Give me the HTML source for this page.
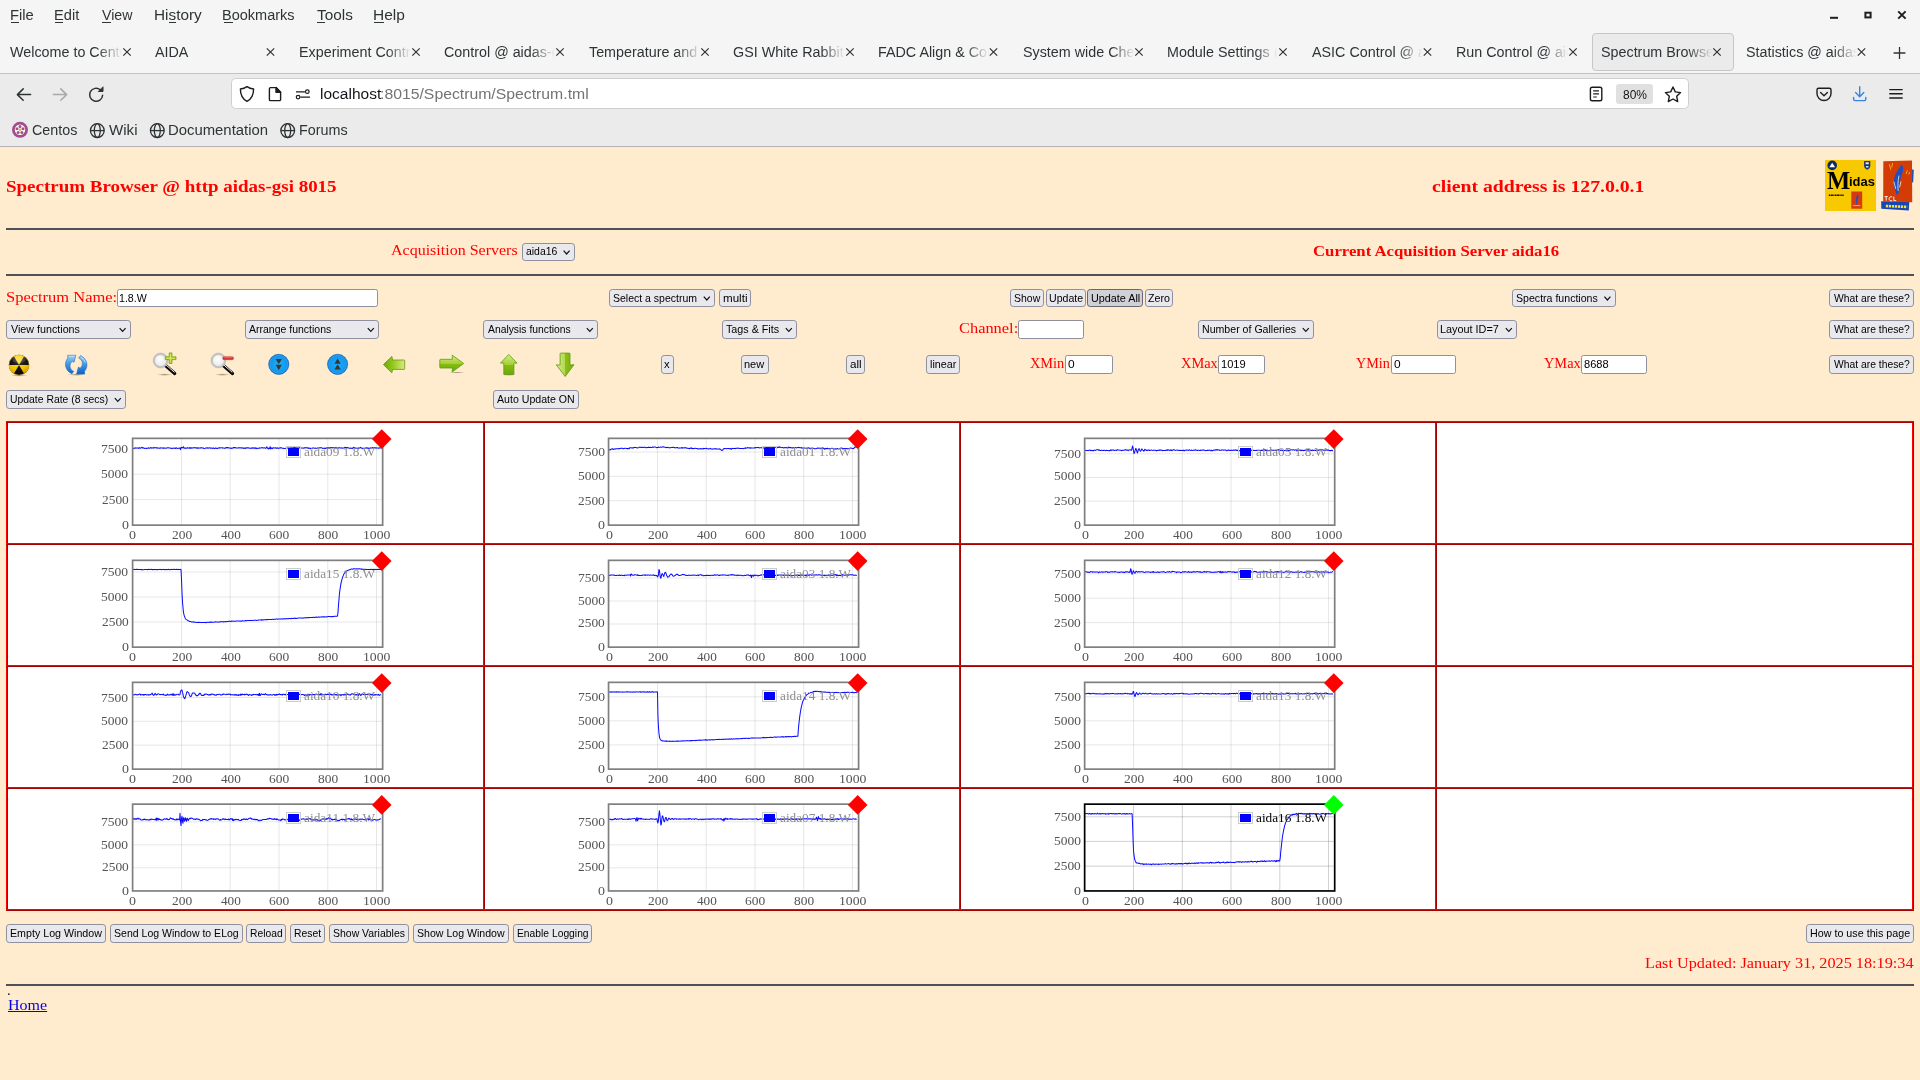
<!DOCTYPE html>
<html lang="en"><head><meta charset="utf-8"><title>Spectrum Browser</title>
<style>
html,body{margin:0;padding:0}
body{width:1920px;height:1080px;position:relative;overflow:hidden;background:#ffebcd;font-family:"Liberation Sans",sans-serif}
div,span,svg{position:absolute;box-sizing:border-box}
.t{white-space:nowrap;line-height:1;transform-origin:0 0;display:block}
.s{font-family:"Liberation Sans",sans-serif}
.sb{font-family:"Liberation Sans",sans-serif;font-weight:bold}
.r{font-family:"Liberation Serif",serif}
.rb{font-family:"Liberation Serif",serif;font-weight:bold}
.btn{background:#e9e9ed;border:1px solid #8f8f9d;border-radius:3.2px}
.btn.on{background:#d0d0d7;border-color:#676774}
.inp{background:#fff;border:1px solid #8f8f9d;border-radius:2.4px}
.hr{background:#4e5258}

</style></head>
<body>
<div style="left:0.00px;top:0.00px;width:1920.00px;height:73.00px;background:#f5f5f5"></div>
<div style="left:0.00px;top:73.00px;width:1920.00px;height:73.00px;background:#ebebeb;border-top:1px solid #c3c3c3"></div>
<div style="left:0.00px;top:146.00px;width:1920.00px;height:1.00px;background:#b4b4b4"></div>
<span class="t s" style="left:9.82px;top:8px;font-size:14.7px;color:#2e3436;transform:scaleX(1.0044);">File</span>
<span class="t s" style="left:53.83px;top:8px;font-size:14.7px;color:#2e3436;transform:scaleX(0.9955);">Edit</span>
<span class="t s" style="left:102.00px;top:8px;font-size:14.7px;color:#2e3436;transform:scaleX(0.9650);">View</span>
<span class="t s" style="left:153.77px;top:8px;font-size:14.7px;color:#2e3436;transform:scaleX(1.0440);">History</span>
<span class="t s" style="left:222.34px;top:8px;font-size:14.7px;color:#2e3436;transform:scaleX(0.9887);">Bookmarks</span>
<span class="t s" style="left:316.69px;top:8px;font-size:14.7px;color:#2e3436;transform:scaleX(1.0443);">Tools</span>
<span class="t s" style="left:372.76px;top:8px;font-size:14.7px;color:#2e3436;transform:scaleX(1.0547);">Help</span>
<div style="left:11.00px;top:21.60px;width:7.50px;height:1.10px;background:#2e3436"></div>
<div style="left:55.00px;top:21.60px;width:8.00px;height:1.10px;background:#2e3436"></div>
<div style="left:102.00px;top:21.60px;width:8.50px;height:1.10px;background:#2e3436"></div>
<div style="left:169.00px;top:21.60px;width:6.50px;height:1.10px;background:#2e3436"></div>
<div style="left:223.50px;top:21.60px;width:9.00px;height:1.10px;background:#2e3436"></div>
<div style="left:317.00px;top:21.60px;width:8.00px;height:1.10px;background:#2e3436"></div>
<div style="left:374.00px;top:21.60px;width:10.00px;height:1.10px;background:#2e3436"></div>
<svg style="left:1824px;top:6px" width="92" height="20" viewBox="1824 6 92 20"><g stroke="#1e1e1e" stroke-width="2" fill="none"><path d="M1830 17.8H1838"/><rect x="1865.4" y="12.7" width="5.2" height="4.7"/><path d="M1898.2 11.4l7.4 7.2M1905.6 11.4l-7.4 7.2"/></g></svg>
<div style="left:1592.30px;top:33.40px;width:141.50px;height:37.20px;background:#ebebeb;border:1px solid #c6c6c6;border-radius:4px"></div>
<div style="left:10px;top:43px;width:112.0px;height:20px;overflow:hidden;-webkit-mask-image:linear-gradient(to right,#000 88px,transparent 112px);mask-image:linear-gradient(to right,#000 88px,transparent 112px)"><span class="t s" style="left:0;top:2px;font-size:14.7px;color:#2e3436;transform:scaleX(.975)">Welcome to CentOS</span></div>
<svg style="left:121px;top:46px" width="12" height="12" viewBox="121 46 12 12"><g transform="translate(127.00 52.00)"><path d="M-3.7 -3.7l7.4 7.4M3.7 -3.7l-7.4 7.4" stroke="#2e3436" stroke-width="1.2" fill="none"/></g></svg>
<div style="left:154.5px;top:43px;width:111.0px;height:20px;overflow:hidden;-webkit-mask-image:linear-gradient(to right,#000 87px,transparent 111px);mask-image:linear-gradient(to right,#000 87px,transparent 111px)"><span class="t s" style="left:0;top:2px;font-size:14.7px;color:#2e3436;transform:scaleX(.975)">AIDA</span></div>
<svg style="left:264px;top:46px" width="13" height="12" viewBox="264 46 13 12"><g transform="translate(270.50 52.00)"><path d="M-3.7 -3.7l7.4 7.4M3.7 -3.7l-7.4 7.4" stroke="#2e3436" stroke-width="1.2" fill="none"/></g></svg>
<div style="left:299px;top:43px;width:112.0px;height:20px;overflow:hidden;-webkit-mask-image:linear-gradient(to right,#000 88px,transparent 112px);mask-image:linear-gradient(to right,#000 88px,transparent 112px)"><span class="t s" style="left:0;top:2px;font-size:14.7px;color:#2e3436;transform:scaleX(.975)">Experiment Control @</span></div>
<svg style="left:410px;top:46px" width="12" height="12" viewBox="410 46 12 12"><g transform="translate(416.00 52.00)"><path d="M-3.7 -3.7l7.4 7.4M3.7 -3.7l-7.4 7.4" stroke="#2e3436" stroke-width="1.2" fill="none"/></g></svg>
<div style="left:444px;top:43px;width:111.0px;height:20px;overflow:hidden;-webkit-mask-image:linear-gradient(to right,#000 87px,transparent 111px);mask-image:linear-gradient(to right,#000 87px,transparent 111px)"><span class="t s" style="left:0;top:2px;font-size:14.7px;color:#2e3436;transform:scaleX(.975)">Control @ aidas-gsi</span></div>
<svg style="left:554px;top:46px" width="12" height="12" viewBox="554 46 12 12"><g transform="translate(560.00 52.00)"><path d="M-3.7 -3.7l7.4 7.4M3.7 -3.7l-7.4 7.4" stroke="#2e3436" stroke-width="1.2" fill="none"/></g></svg>
<div style="left:588.5px;top:43px;width:111.5px;height:20px;overflow:hidden;-webkit-mask-image:linear-gradient(to right,#000 88px,transparent 112px);mask-image:linear-gradient(to right,#000 88px,transparent 112px)"><span class="t s" style="left:0;top:2px;font-size:14.7px;color:#2e3436;transform:scaleX(.975)">Temperature and status</span></div>
<svg style="left:699px;top:46px" width="12" height="12" viewBox="699 46 12 12"><g transform="translate(705.00 52.00)"><path d="M-3.7 -3.7l7.4 7.4M3.7 -3.7l-7.4 7.4" stroke="#2e3436" stroke-width="1.2" fill="none"/></g></svg>
<div style="left:733px;top:43px;width:112.0px;height:20px;overflow:hidden;-webkit-mask-image:linear-gradient(to right,#000 88px,transparent 112px);mask-image:linear-gradient(to right,#000 88px,transparent 112px)"><span class="t s" style="left:0;top:2px;font-size:14.7px;color:#2e3436;transform:scaleX(.975)">GSI White Rabbit Cont</span></div>
<svg style="left:844px;top:46px" width="12" height="12" viewBox="844 46 12 12"><g transform="translate(850.00 52.00)"><path d="M-3.7 -3.7l7.4 7.4M3.7 -3.7l-7.4 7.4" stroke="#2e3436" stroke-width="1.2" fill="none"/></g></svg>
<div style="left:877.5px;top:43px;width:111.0px;height:20px;overflow:hidden;-webkit-mask-image:linear-gradient(to right,#000 87px,transparent 111px);mask-image:linear-gradient(to right,#000 87px,transparent 111px)"><span class="t s" style="left:0;top:2px;font-size:14.7px;color:#2e3436;transform:scaleX(.975)">FADC Align &amp; Control</span></div>
<svg style="left:987px;top:46px" width="13" height="12" viewBox="987 46 13 12"><g transform="translate(993.50 52.00)"><path d="M-3.7 -3.7l7.4 7.4M3.7 -3.7l-7.4 7.4" stroke="#2e3436" stroke-width="1.2" fill="none"/></g></svg>
<div style="left:1022.5px;top:43px;width:111.5px;height:20px;overflow:hidden;-webkit-mask-image:linear-gradient(to right,#000 88px,transparent 112px);mask-image:linear-gradient(to right,#000 88px,transparent 112px)"><span class="t s" style="left:0;top:2px;font-size:14.7px;color:#2e3436;transform:scaleX(.975)">System wide Checks</span></div>
<svg style="left:1133px;top:46px" width="12" height="12" viewBox="1133 46 12 12"><g transform="translate(1139.00 52.00)"><path d="M-3.7 -3.7l7.4 7.4M3.7 -3.7l-7.4 7.4" stroke="#2e3436" stroke-width="1.2" fill="none"/></g></svg>
<div style="left:1167px;top:43px;width:111.0px;height:20px;overflow:hidden;-webkit-mask-image:linear-gradient(to right,#000 87px,transparent 111px);mask-image:linear-gradient(to right,#000 87px,transparent 111px)"><span class="t s" style="left:0;top:2px;font-size:14.7px;color:#2e3436;transform:scaleX(.975)">Module Settings @ a</span></div>
<svg style="left:1277px;top:46px" width="12" height="12" viewBox="1277 46 12 12"><g transform="translate(1283.00 52.00)"><path d="M-3.7 -3.7l7.4 7.4M3.7 -3.7l-7.4 7.4" stroke="#2e3436" stroke-width="1.2" fill="none"/></g></svg>
<div style="left:1311.5px;top:43px;width:111.0px;height:20px;overflow:hidden;-webkit-mask-image:linear-gradient(to right,#000 87px,transparent 111px);mask-image:linear-gradient(to right,#000 87px,transparent 111px)"><span class="t s" style="left:0;top:2px;font-size:14.7px;color:#2e3436;transform:scaleX(.975)">ASIC Control @ aidas</span></div>
<svg style="left:1421px;top:46px" width="13" height="12" viewBox="1421 46 13 12"><g transform="translate(1427.50 52.00)"><path d="M-3.7 -3.7l7.4 7.4M3.7 -3.7l-7.4 7.4" stroke="#2e3436" stroke-width="1.2" fill="none"/></g></svg>
<div style="left:1456px;top:43px;width:112.0px;height:20px;overflow:hidden;-webkit-mask-image:linear-gradient(to right,#000 88px,transparent 112px);mask-image:linear-gradient(to right,#000 88px,transparent 112px)"><span class="t s" style="left:0;top:2px;font-size:14.7px;color:#2e3436;transform:scaleX(.975)">Run Control @ aidas</span></div>
<svg style="left:1567px;top:46px" width="12" height="12" viewBox="1567 46 12 12"><g transform="translate(1573.00 52.00)"><path d="M-3.7 -3.7l7.4 7.4M3.7 -3.7l-7.4 7.4" stroke="#2e3436" stroke-width="1.2" fill="none"/></g></svg>
<div style="left:1600.7px;top:43px;width:111.3px;height:20px;overflow:hidden;-webkit-mask-image:linear-gradient(to right,#000 87px,transparent 111px);mask-image:linear-gradient(to right,#000 87px,transparent 111px)"><span class="t s" style="left:0;top:2px;font-size:14.7px;color:#2e3436;transform:scaleX(.975)">Spectrum Browser @</span></div>
<svg style="left:1711px;top:46px" width="12" height="12" viewBox="1711 46 12 12"><g transform="translate(1717.00 52.00)"><path d="M-3.7 -3.7l7.4 7.4M3.7 -3.7l-7.4 7.4" stroke="#2e3436" stroke-width="1.2" fill="none"/></g></svg>
<div style="left:1745.5px;top:43px;width:111.0px;height:20px;overflow:hidden;-webkit-mask-image:linear-gradient(to right,#000 87px,transparent 111px);mask-image:linear-gradient(to right,#000 87px,transparent 111px)"><span class="t s" style="left:0;top:2px;font-size:14.7px;color:#2e3436;transform:scaleX(.975)">Statistics @ aidas-gsi</span></div>
<svg style="left:1855px;top:46px" width="13" height="12" viewBox="1855 46 13 12"><g transform="translate(1861.50 52.00)"><path d="M-3.7 -3.7l7.4 7.4M3.7 -3.7l-7.4 7.4" stroke="#2e3436" stroke-width="1.2" fill="none"/></g></svg>
<svg style="left:1891px;top:45px" width="17" height="16" viewBox="1891 45 17 16"><g transform="translate(1899.50 53.00)"><path d="M0 -5.9v11.8M-5.9 0h11.8" stroke="#2e3436" stroke-width="1.3" fill="none"/></g></svg>
<svg style="left:10px;top:84px" width="100" height="22" viewBox="10 84 100 22" fill="none" stroke-linecap="round" stroke-linejoin="round" stroke-width="1.5"><path d="M30.6 94.6H17.6M23.2 88.9l-5.8 5.7 5.8 5.7" stroke="#2e3436"/><path d="M53.4 94.6H66.4M60.8 88.9l5.8 5.7-5.8 5.7" stroke="#a9a9a9"/><path d="M102.6 95.2a6.5 6.5 0 1 1-2.2-5.3" stroke="#2e3436"/><path d="M103 87.2v4.3h-4.3z" fill="#2e3436" stroke="#2e3436" stroke-width="1"/></svg>
<div style="left:231.20px;top:78.30px;width:1457.50px;height:31.00px;background:#fff;border:1px solid #cfcfcf;border-radius:4.5px"></div>
<svg style="left:236px;top:84px" width="80" height="20" viewBox="236 84 80 20" fill="none" stroke="#1c1c1c" stroke-width="1.4" stroke-linejoin="round"><path d="M247 86.6c2.2 1.6 4.3 2.2 6.6 2.4 0 5.4-1.3 9.6-6.6 12.4-5.3-2.8-6.6-7-6.6-12.4 2.3-.2 4.4-.8 6.6-2.4z"/><path d="M270.6 87.6h5.4l4.6 4.6v7.2a1.2 1.2 0 0 1-1.2 1.2h-8.8a1.2 1.2 0 0 1-1.2-1.2v-10.6a1.2 1.2 0 0 1 1.2-1.2z"/><path d="M276 87.6v4.6h4.6z" fill="#1c1c1c"/><g stroke-width="1.25"><path d="M296 91.8h8.9M300.4 97.2H310"/><circle cx="307.3" cy="91.7" r="1.8"/><circle cx="298.1" cy="97.1" r="1.8"/></g></svg>
<span class="t s" style="left:320.49px;top:86px;font-size:15.3px;color:#15141a;transform:scaleX(1.0141);">localhost</span>
<span class="t s" style="left:380.28px;top:86px;font-size:15.3px;color:#737373;transform:scaleX(1.0313);">:8015/Spectrum/Spectrum.tml</span>
<svg style="left:1588px;top:84px" width="100" height="20" viewBox="1588 84 100 20" fill="none" stroke="#1c1c1c" stroke-width="1.4" stroke-linejoin="round"><rect x="1590.4" y="87.2" width="11.4" height="13.6" rx="1.8"/><path d="M1593.2 90.8h5.8M1593.2 93.9h5.8M1593.2 97h3.6" stroke-width="1.2"/><path d="M1673 87l2.3 4.9 5.3.7-3.9 3.7 1 5.3-4.7-2.6-4.7 2.6 1-5.3-3.9-3.7 5.3-.7z"/></svg>
<div style="left:1615.90px;top:84.40px;width:37.00px;height:19.30px;background:#e0e0e0;border-radius:3px"></div>
<span class="t s" style="left:1622.72px;top:89px;font-size:12.3px;color:#15141a;transform:scaleX(0.9756);">80%</span>
<svg style="left:1812px;top:84px" width="96" height="20" viewBox="1812 84 96 20" fill="none" stroke-width="1.4" stroke-linecap="round" stroke-linejoin="round"><path d="M1818.6 88.3h10.8a1.6 1.6 0 0 1 1.6 1.6v3.6a7 7 0 0 1-14 0v-3.6a1.6 1.6 0 0 1 1.6-1.6z" stroke="#1c1c1c"/><path d="M1820.6 92.6l3.4 3.2 3.4-3.2" stroke="#1c1c1c"/><path d="M1859.7 86.8v9.6M1855.6 92.6l4.1 4.1 4.1-4.1M1853.6 97.4v1.6a1.6 1.6 0 0 0 1.6 1.6h9a1.6 1.6 0 0 0 1.6-1.6v-1.6" stroke="#3584e4"/><path d="M1889.8 89.6h12.4M1889.8 93.8h12.4M1889.8 98h12.4" stroke="#1c1c1c"/></svg>
<svg style="left:10px;top:119px" width="20" height="21" viewBox="10 119 20 21"><g transform="translate(20.00 129.80)"><circle r="8" fill="#a14f8c"/><circle r="5.2" fill="#fff"/><g fill="#a14f8c"><circle cx="0" cy="-3.2" r="1.5"/><circle cx="3" cy="-1" r="1.5"/><circle cx="1.9" cy="2.6" r="1.5"/><circle cx="-1.9" cy="2.6" r="1.5"/><circle cx="-3" cy="-1" r="1.5"/></g><circle r="1.3" fill="#efa724"/></g></svg>
<span class="t s" style="left:31.58px;top:123px;font-size:14.7px;color:#2e3436;transform:scaleX(0.9747);">Centos</span>
<svg style="left:88px;top:121px" width="19" height="19" viewBox="88 121 19 19" fill="none" stroke="#2e3436" stroke-width="1.3"><g transform="translate(97.30 130.60)"><circle r="6.9"/><ellipse rx="3" ry="6.9"/><path d="M-6.9 0H6.9"/></g></svg>
<span class="t s" style="left:109.00px;top:123px;font-size:14.7px;color:#2e3436;transform:scaleX(1.0279);">Wiki</span>
<svg style="left:148px;top:121px" width="19" height="19" viewBox="148 121 19 19" fill="none" stroke="#2e3436" stroke-width="1.3"><g transform="translate(157.30 130.60)"><circle r="6.9"/><ellipse rx="3" ry="6.9"/><path d="M-6.9 0H6.9"/></g></svg>
<span class="t s" style="left:167.81px;top:123px;font-size:14.7px;color:#2e3436;transform:scaleX(1.0124);">Documentation</span>
<svg style="left:278px;top:121px" width="19" height="19" viewBox="278 121 19 19" fill="none" stroke="#2e3436" stroke-width="1.3"><g transform="translate(287.70 130.60)"><circle r="6.9"/><ellipse rx="3" ry="6.9"/><path d="M-6.9 0H6.9"/></g></svg>
<span class="t s" style="left:298.85px;top:123px;font-size:14.7px;color:#2e3436;transform:scaleX(0.9763);">Forums</span>
<span class="t rb" style="left:6.05px;top:178px;font-size:17.2px;color:#ff0000;transform:scaleX(1.1041);">Spectrum Browser @ http aidas-gsi 8015</span>
<span class="t rb" style="left:1432.41px;top:178px;font-size:17.2px;color:#ff0000;transform:scaleX(1.1486);">client address is 127.0.0.1</span>
<div class="hr" style="left:6.20px;top:228.00px;width:1907.40px;height:2.00px;"></div>
<span class="t r" style="left:391.42px;top:243px;font-size:14.8px;color:#ff0000;transform:scaleX(1.0811);">Acquisition Servers</span>
<div class="btn" style="left:521.60px;top:242.80px;width:53.20px;height:18.40px;"></div>
<span class="t s" style="left:525.58px;top:246px;font-size:10.9px;color:#000;transform:scaleX(0.9583);">aida16</span>
<svg style="left:561px;top:247px" width="11" height="11" viewBox="561 247 11 11"><g transform="translate(566.60 252.40)"><path d="M-3 -1.7L0 1.6 3 -1.7" fill="none" stroke="#15141a" stroke-width="1.25"/></g></svg>
<span class="t rb" style="left:1313.25px;top:244px;font-size:14.8px;color:#ff0000;transform:scaleX(1.1304);">Current Acquisition Server aida16</span>
<div class="hr" style="left:6.20px;top:273.60px;width:1907.40px;height:2.00px;"></div>
<span class="t r" style="left:5.93px;top:290px;font-size:14.8px;color:#ff0000;transform:scaleX(1.1130);">Spectrum Name:</span>
<div class="inp" style="left:117.20px;top:289.20px;width:260.60px;height:17.50px;"></div>
<span class="t s" style="left:119.20px;top:293px;font-size:10.9px;color:#000;transform:scaleX(0.9752);">1.8.W</span>
<div class="btn" style="left:609.00px;top:289.20px;width:106.00px;height:17.50px;"></div>
<span class="t s" style="left:613.03px;top:293px;font-size:10.9px;color:#000;transform:scaleX(0.9645);">Select a spectrum</span>
<svg style="left:701px;top:293px" width="11" height="11" viewBox="701 293 11 11"><g transform="translate(706.80 298.35)"><path d="M-3 -1.7L0 1.6 3 -1.7" fill="none" stroke="#15141a" stroke-width="1.25"/></g></svg>
<div class="btn" style="left:719.00px;top:289.20px;width:32.00px;height:17.50px;"></div>
<span class="t s" style="left:722.74px;top:293px;font-size:10.9px;color:#000;transform:scaleX(1.0657);">multi</span>
<div class="btn" style="left:1010.10px;top:289.20px;width:34.20px;height:17.50px;"></div>
<span class="t s" style="left:1014.03px;top:293px;font-size:10.9px;color:#000;transform:scaleX(0.9622);">Show</span>
<div class="btn" style="left:1045.70px;top:289.20px;width:40.50px;height:17.50px;"></div>
<span class="t s" style="left:1048.70px;top:293px;font-size:10.9px;color:#000;transform:scaleX(0.9735);">Update</span>
<div class="btn on" style="left:1087.40px;top:289.20px;width:56.00px;height:17.50px;"></div>
<span class="t s" style="left:1090.59px;top:293px;font-size:10.9px;color:#000;transform:scaleX(0.9922);">Update All</span>
<div class="btn" style="left:1144.80px;top:289.20px;width:27.80px;height:17.50px;"></div>
<span class="t s" style="left:1147.68px;top:293px;font-size:10.9px;color:#000;transform:scaleX(0.9798);">Zero</span>
<div class="btn" style="left:1512.00px;top:289.20px;width:103.60px;height:17.50px;"></div>
<span class="t s" style="left:1516.02px;top:293px;font-size:10.9px;color:#000;transform:scaleX(0.9720);">Spectra functions</span>
<svg style="left:1602px;top:293px" width="11" height="11" viewBox="1602 293 11 11"><g transform="translate(1607.40 298.35)"><path d="M-3 -1.7L0 1.6 3 -1.7" fill="none" stroke="#15141a" stroke-width="1.25"/></g></svg>
<div class="btn" style="left:1829.00px;top:289.20px;width:84.80px;height:17.50px;"></div>
<span class="t s" style="left:1833.50px;top:293px;font-size:10.9px;color:#000;transform:scaleX(0.9489);">What are these?</span>
<div class="btn" style="left:6.10px;top:320.10px;width:124.70px;height:18.60px;"></div>
<span class="t s" style="left:10.60px;top:324px;font-size:10.9px;color:#000;transform:scaleX(0.9841);">View functions</span>
<svg style="left:117px;top:324px" width="11" height="11" viewBox="117 324 11 11"><g transform="translate(122.60 329.80)"><path d="M-3 -1.7L0 1.6 3 -1.7" fill="none" stroke="#15141a" stroke-width="1.25"/></g></svg>
<div class="btn" style="left:245.00px;top:320.10px;width:134.00px;height:18.60px;"></div>
<span class="t s" style="left:249.00px;top:324px;font-size:10.9px;color:#000;transform:scaleX(0.9639);">Arrange functions</span>
<svg style="left:365px;top:324px" width="11" height="11" viewBox="365 324 11 11"><g transform="translate(370.80 329.80)"><path d="M-3 -1.7L0 1.6 3 -1.7" fill="none" stroke="#15141a" stroke-width="1.25"/></g></svg>
<div class="btn" style="left:483.00px;top:320.10px;width:115.00px;height:18.60px;"></div>
<span class="t s" style="left:487.50px;top:324px;font-size:10.9px;color:#000;transform:scaleX(0.9497);">Analysis functions</span>
<svg style="left:584px;top:324px" width="11" height="11" viewBox="584 324 11 11"><g transform="translate(589.80 329.80)"><path d="M-3 -1.7L0 1.6 3 -1.7" fill="none" stroke="#15141a" stroke-width="1.25"/></g></svg>
<div class="btn" style="left:721.60px;top:320.10px;width:75.40px;height:18.60px;"></div>
<span class="t s" style="left:725.79px;top:324px;font-size:10.9px;color:#000;transform:scaleX(0.9850);">Tags &amp; Fits</span>
<svg style="left:783px;top:324px" width="11" height="11" viewBox="783 324 11 11"><g transform="translate(788.80 329.80)"><path d="M-3 -1.7L0 1.6 3 -1.7" fill="none" stroke="#15141a" stroke-width="1.25"/></g></svg>
<span class="t r" style="left:959.34px;top:321px;font-size:14.8px;color:#ff0000;transform:scaleX(1.1078);">Channel:</span>
<div class="inp" style="left:1018.30px;top:320.10px;width:65.40px;height:18.60px;"></div>
<div class="btn" style="left:1198.00px;top:320.10px;width:116.00px;height:18.60px;"></div>
<span class="t s" style="left:1201.65px;top:324px;font-size:10.9px;color:#000;transform:scaleX(0.9723);">Number of Galleries</span>
<svg style="left:1300px;top:324px" width="11" height="11" viewBox="1300 324 11 11"><g transform="translate(1305.80 329.80)"><path d="M-3 -1.7L0 1.6 3 -1.7" fill="none" stroke="#15141a" stroke-width="1.25"/></g></svg>
<div class="btn" style="left:1437.00px;top:320.10px;width:80.00px;height:18.60px;"></div>
<span class="t s" style="left:1440.13px;top:324px;font-size:10.9px;color:#000;transform:scaleX(0.9963);">Layout ID=7</span>
<svg style="left:1503px;top:324px" width="11" height="11" viewBox="1503 324 11 11"><g transform="translate(1508.80 329.80)"><path d="M-3 -1.7L0 1.6 3 -1.7" fill="none" stroke="#15141a" stroke-width="1.25"/></g></svg>
<div class="btn" style="left:1829.00px;top:320.10px;width:84.80px;height:18.60px;"></div>
<span class="t s" style="left:1833.50px;top:324px;font-size:10.9px;color:#000;transform:scaleX(0.9489);">What are these?</span>
<div class="btn" style="left:660.60px;top:354.80px;width:13.60px;height:18.80px;"></div>
<span class="t s" style="left:664.49px;top:359px;font-size:10.9px;color:#000;transform:scaleX(1.0321);">x</span>
<div class="btn" style="left:740.60px;top:354.80px;width:28.40px;height:18.80px;"></div>
<span class="t s" style="left:744.28px;top:359px;font-size:10.9px;color:#000;transform:scaleX(1.0107);">new</span>
<div class="btn" style="left:845.60px;top:354.80px;width:19.40px;height:18.80px;"></div>
<span class="t s" style="left:849.53px;top:359px;font-size:10.9px;color:#000;transform:scaleX(1.0703);">all</span>
<div class="btn" style="left:926.00px;top:354.80px;width:34.30px;height:18.80px;"></div>
<span class="t s" style="left:929.80px;top:359px;font-size:10.9px;color:#000;transform:scaleX(0.9871);">linear</span>
<span class="t r" style="left:1030.21px;top:356px;font-size:14.8px;color:#ff0000;transform:scaleX(0.9698);">XMin</span>
<div class="inp" style="left:1065.00px;top:354.80px;width:48.00px;height:18.80px;"></div>
<span class="t s" style="left:1068.18px;top:359px;font-size:10.9px;color:#000;transform:scaleX(1.0971);">0</span>
<span class="t r" style="left:1180.71px;top:356px;font-size:14.8px;color:#ff0000;transform:scaleX(0.9714);">XMax</span>
<div class="inp" style="left:1218.00px;top:354.80px;width:47.00px;height:18.80px;"></div>
<span class="t s" style="left:1220.77px;top:359px;font-size:10.9px;color:#000;transform:scaleX(1.0199);">1019</span>
<span class="t r" style="left:1355.86px;top:356px;font-size:14.8px;color:#ff0000;transform:scaleX(0.9571);">YMin</span>
<div class="inp" style="left:1390.50px;top:354.80px;width:65.50px;height:18.80px;"></div>
<span class="t s" style="left:1393.58px;top:359px;font-size:10.9px;color:#000;transform:scaleX(1.0971);">0</span>
<span class="t r" style="left:1543.86px;top:356px;font-size:14.8px;color:#ff0000;transform:scaleX(0.9702);">YMax</span>
<div class="inp" style="left:1581.00px;top:354.80px;width:66.00px;height:18.80px;"></div>
<span class="t s" style="left:1584.16px;top:359px;font-size:10.9px;color:#000;transform:scaleX(1.0179);">8688</span>
<div class="btn" style="left:1829.00px;top:354.80px;width:84.80px;height:18.80px;"></div>
<span class="t s" style="left:1833.50px;top:359px;font-size:10.9px;color:#000;transform:scaleX(0.9489);">What are these?</span>
<div class="btn" style="left:6.10px;top:390.10px;width:119.90px;height:18.60px;"></div>
<span class="t s" style="left:9.82px;top:394px;font-size:10.9px;color:#000;transform:scaleX(0.9544);">Update Rate (8 secs)</span>
<svg style="left:112px;top:394px" width="11" height="11" viewBox="112 394 11 11"><g transform="translate(117.80 399.80)"><path d="M-3 -1.7L0 1.6 3 -1.7" fill="none" stroke="#15141a" stroke-width="1.25"/></g></svg>
<div class="btn" style="left:493.00px;top:390.10px;width:86.00px;height:18.60px;"></div>
<span class="t s" style="left:497.30px;top:394px;font-size:10.9px;color:#000;transform:scaleX(0.9730);">Auto Update ON</span>
<div class="btn" style="left:6.00px;top:924.20px;width:100.00px;height:18.80px;"></div>
<span class="t s" style="left:9.65px;top:928px;font-size:10.9px;color:#000;transform:scaleX(0.9797);">Empty Log Window</span>
<div class="btn" style="left:110.00px;top:924.20px;width:132.50px;height:18.80px;"></div>
<span class="t s" style="left:114.03px;top:928px;font-size:10.9px;color:#000;transform:scaleX(0.9671);">Send Log Window to ELog</span>
<div class="btn" style="left:246.00px;top:924.20px;width:40.00px;height:18.80px;"></div>
<span class="t s" style="left:249.68px;top:928px;font-size:10.9px;color:#000;transform:scaleX(0.9447);">Reload</span>
<div class="btn" style="left:290.00px;top:924.20px;width:35.00px;height:18.80px;"></div>
<span class="t s" style="left:293.67px;top:928px;font-size:10.9px;color:#000;transform:scaleX(0.9501);">Reset</span>
<div class="btn" style="left:329.00px;top:924.20px;width:80.00px;height:18.80px;"></div>
<span class="t s" style="left:333.03px;top:928px;font-size:10.9px;color:#000;transform:scaleX(0.9613);">Show Variables</span>
<div class="btn" style="left:413.00px;top:924.20px;width:96.00px;height:18.80px;"></div>
<span class="t s" style="left:417.02px;top:928px;font-size:10.9px;color:#000;transform:scaleX(0.9709);">Show Log Window</span>
<div class="btn" style="left:513.00px;top:924.20px;width:79.00px;height:18.80px;"></div>
<span class="t s" style="left:516.68px;top:928px;font-size:10.9px;color:#000;transform:scaleX(0.9457);">Enable Logging</span>
<div class="btn" style="left:1806.00px;top:924.20px;width:107.80px;height:18.80px;"></div>
<span class="t s" style="left:1809.64px;top:928px;font-size:10.9px;color:#000;transform:scaleX(0.9851);">How to use this page</span>
<span class="t r" style="left:1644.59px;top:956px;font-size:14.8px;color:#ff0000;transform:scaleX(1.0965);">Last Updated: January 31, 2025 18:19:34</span>
<div class="hr" style="left:6.20px;top:984.40px;width:1907.40px;height:2.00px;"></div>
<span class="t r" style="left:7.30px;top:983px;font-size:14.8px;color:#222;transform:scaleX(1.0006);">.</span>
<span class="t r" style="left:7.80px;top:998px;font-size:14.8px;color:#0000ee;transform:scaleX(1.0822);text-decoration:underline">Home</span>
<div style="left:6.00px;top:421.00px;width:1908.00px;height:490.00px;background:#fff"></div>
<div style="left:6.00px;top:421.00px;width:2.00px;height:490.00px;background:linear-gradient(to right,#ff0000 50%,#a80000 50%)"></div>
<div style="left:483.00px;top:421.00px;width:2.00px;height:490.00px;background:linear-gradient(to right,#ff0000 50%,#a80000 50%)"></div>
<div style="left:959.00px;top:421.00px;width:2.00px;height:490.00px;background:linear-gradient(to right,#ff0000 50%,#a80000 50%)"></div>
<div style="left:1435.00px;top:421.00px;width:2.00px;height:490.00px;background:linear-gradient(to right,#ff0000 50%,#a80000 50%)"></div>
<div style="left:1912.00px;top:421.00px;width:2.00px;height:490.00px;background:linear-gradient(to right,#ff0000 50%,#a80000 50%)"></div>
<div style="left:6.00px;top:421.00px;width:1908.00px;height:2.00px;background:linear-gradient(to bottom,#ff0000 50%,#a80000 50%)"></div>
<div style="left:6.00px;top:543.00px;width:1908.00px;height:2.00px;background:linear-gradient(to bottom,#ff0000 50%,#a80000 50%)"></div>
<div style="left:6.00px;top:665.00px;width:1908.00px;height:2.00px;background:linear-gradient(to bottom,#ff0000 50%,#a80000 50%)"></div>
<div style="left:6.00px;top:787.00px;width:1908.00px;height:2.00px;background:linear-gradient(to bottom,#ff0000 50%,#a80000 50%)"></div>
<div style="left:6.00px;top:909.00px;width:1908.00px;height:2.00px;background:linear-gradient(to bottom,#ff0000 50%,#a80000 50%)"></div>
<svg style="left:129px;top:425px" width="267" height="105" viewBox="129 425 267 105"><path d="M181.5 438.5V525.1M230.2 438.5V525.1M279 438.5V525.1M327.8 438.5V525.1M376.5 438.5V525.1M132.8 499.6H382.1M132.8 474.2H382.1M132.8 448.8H382.1" stroke="rgba(84,84,84,0.16)" stroke-width="0.9" fill="none"/><path d="M132.8 448.4L133.2 448.4L133.7 448.5L134.2 448.2L134.7 448.1L135.2 447.8L135.7 448.2L136.2 448L136.7 448L137.1 447.9L137.6 448L138.1 448.1L138.6 448.4L139.1 447.7L139.6 447.8L140.1 448.1L140.6 448.2L141 448L141.5 447.5L142 447.3L142.5 447.9L143 447.8L143.5 447.8L144 448.3L144.4 448.4L144.9 448.3L145.4 448.3L145.9 448.3L146.4 448.5L146.9 448.3L147.4 448.2L147.9 448.2L148.3 447.7L148.8 448.2L149.3 448.2L149.8 448.1L150.3 447.6L150.8 447.9L151.3 448.2L151.8 447.7L152.2 447.9L152.7 448.1L153.2 447.6L153.7 448.1L154.2 447.8L154.7 447.6L155.2 447.7L155.7 447.8L156.2 447.7L156.6 448L157.1 447.7L157.6 447.9L158.1 448.2L158.6 448.1L159.1 447.9L159.6 448.2L160.1 448.3L160.5 447.9L161 447.7L161.5 447.9L162 447.9L162.5 447.9L163 448.3L163.5 447.8L163.9 448.3L164.4 447.9L164.9 447.9L165.4 448.2L165.9 448.2L166.4 448.1L166.9 447.9L167.4 447.8L167.8 447.8L168.3 447.9L168.8 447.7L169.3 447.9L169.8 448L170.3 448L170.8 448.3L171.3 448.3L171.8 448.6L172.2 448.3L172.7 448.2L173.2 448.1L173.7 448.2L174.2 448.3L174.7 448.1L175.2 448.2L175.7 448.5L176.1 447.7L176.6 448L177.1 448.3L177.6 448.4L178.1 448.3L178.6 448.1L179.1 448.4L179.6 448.2L180 447.7L180.5 449.7L181 448.1L181.5 447.3L182 447.7L182.5 447.6L183 447.8L183.4 446.7L183.9 447.8L184.4 448.3L184.9 447.8L185.4 448.1L185.9 448.3L186.4 448.2L186.9 448.3L187.3 447.6L187.8 447.9L188.3 447.9L188.8 448.1L189.3 448.2L189.8 447.5L190.3 448.3L190.8 447.8L191.2 448.2L191.7 447.8L192.2 448L192.7 448.1L193.2 447.8L193.7 447.8L194.2 447.8L194.7 447.6L195.2 447.6L195.6 448L196.1 447.9L196.6 447.7L197.1 448.4L197.6 447.7L198.1 448.2L198.6 447.9L199.1 448L199.5 448.1L200 448L200.5 448.1L201 447.6L201.5 447.7L202 448.1L202.5 447.9L202.9 447.9L203.4 447.9L203.9 448.5L204.4 448.4L204.9 448.5L205.4 448L205.9 448.1L206.4 447.8L206.8 448.1L207.3 448.2L207.8 447.7L208.3 448.2L208.8 448.1L209.3 447.9L209.8 447.6L210.3 448.3L210.8 448.1L211.2 448L211.7 448.2L212.2 448.2L212.7 448.4L213.2 447.9L213.7 448.3L214.2 448.4L214.6 448.4L215.1 448.1L215.6 448L216.1 448.4L216.6 448.3L217.1 448.3L217.6 448.6L218.1 448.2L218.6 447.8L219 448.1L219.5 447.7L220 448.1L220.5 447.9L221 447.7L221.5 447.7L222 447.9L222.4 447.8L222.9 448.1L223.4 447.9L223.9 448.1L224.4 448.2L224.9 448.3L225.4 447.8L225.9 448.1L226.3 447.5L226.8 447.6L227.3 447.4L227.8 448L228.3 447.6L228.8 447.9L229.3 448L229.8 448.1L230.2 448L230.7 448.2L231.2 448.5L231.7 448.1L232.2 448.1L232.7 448.2L233.2 447.8L233.7 447.5L234.1 447.6L234.6 447.9L235.1 447.4L235.6 447.6L236.1 448L236.6 448L237.1 447.9L237.6 448.1L238.1 448L238.5 447.7L239 447.7L239.5 447.8L240 448.1L240.5 447.8L241 447.8L241.5 447.9L241.9 447.8L242.4 448.1L242.9 448L243.4 448.4L243.9 447.9L244.4 448.4L244.9 448.2L245.4 447.9L245.8 448.4L246.3 448.1L246.8 447.6L247.3 447.8L247.8 448L248.3 447.8L248.8 448.1L249.3 448.1L249.8 448.2L250.2 448.1L250.7 448.4L251.2 448.2L251.7 448.2L252.2 447.6L252.7 448.2L253.2 448.2L253.6 447.9L254.1 447.8L254.6 448.4L255.1 447.7L255.6 448.2L256.1 448.7L256.6 448L257.1 448.4L257.6 448.6L258 448.2L258.5 448.3L259 448.3L259.5 447.8L260 447.9L260.5 447.9L261 447.9L261.4 447.8L261.9 447.7L262.4 447.6L262.9 447.8L263.4 448L263.9 447.9L264.4 447.7L264.9 447.7L265.4 448.4L265.8 448.1L266.3 447.9L266.8 446.7L267.3 448L267.8 448.1L268.3 449.1L268.8 448.3L269.2 448L269.7 448.6L270.2 446.7L270.7 448.9L271.2 448.4L271.7 447.9L272.2 448.5L272.7 448.5L273.1 447.6L273.6 447.8L274.1 447.9L274.6 447.9L275.1 447.8L275.6 447.7L276.1 448.4L276.6 448.2L277 447.8L277.5 447.8L278 448.4L278.5 448.2L279 448.3L279.5 448.1L280 447.7L280.5 448L280.9 447.5L281.4 447.9L281.9 448.1L282.4 448.3L282.9 448.1L283.4 448.3L283.9 448.5L284.4 448.5L284.9 448.5L285.3 448.3L285.8 448.2L286.3 448.3L286.8 448.1L287.3 447.9L287.8 447.9L288.3 448L288.8 448L289.2 448.1L289.7 448.1L290.2 448.1L290.7 448L291.2 447.8L291.7 448L292.2 448.1L292.6 447.9L293.1 447.7L293.6 447.9L294.1 447.6L294.6 447.5L295.1 447.9L295.6 447.8L296.1 448.2L296.5 447.9L297 447.7L297.5 448L298 448.5L298.5 448L299 447.8L299.5 447.8L300 448L300.4 447.9L300.9 447.9L301.4 448.1L301.9 448L302.4 447.9L302.9 448L303.4 448.2L303.9 448.1L304.4 448.1L304.8 447.6L305.3 447.7L305.8 447.9L306.3 447.6L306.8 447.9L307.3 447.8L307.8 447.9L308.2 447.8L308.7 448.5L309.2 448.3L309.7 448.1L310.2 448.2L310.7 448.8L311.2 448.2L311.7 448.4L312.1 448.4L312.6 448.1L313.1 447.8L313.6 448.1L314.1 448.1L314.6 448.3L315.1 448.2L315.6 448.1L316 448.3L316.5 448.3L317 448.2L317.5 448.1L318 448L318.5 448.1L319 447.7L319.5 447.8L319.9 447.9L320.4 447.6L320.9 447.8L321.4 447.6L321.9 447.9L322.4 448.3L322.9 448.4L323.4 448.3L323.9 448.3L324.3 448L324.8 448.6L325.3 448.3L325.8 448.4L326.3 447.9L326.8 448L327.3 447.7L327.8 448.2L328.2 448.2L328.7 447.7L329.2 448.1L329.7 448.2L330.2 447.7L330.7 447.6L331.2 447.7L331.6 447.7L332.1 447.5L332.6 447.7L333.1 447.7L333.6 447.8L334.1 447.8L334.6 448L335.1 448L335.5 447.6L336 447.9L336.5 447.8L337 447.9L337.5 448.1L338 448.1L338.5 448.1L339 447.6L339.4 447.7L339.9 447.9L340.4 447.9L340.9 447.9L341.4 447.9L341.9 447.8L342.4 448.2L342.9 448.1L343.4 448L343.8 447.9L344.3 447.9L344.8 447.3L345.3 447.6L345.8 447.7L346.3 447.4L346.8 447.7L347.2 447.8L347.7 447.5L348.2 447.8L348.7 447.9L349.2 448.2L349.7 448.3L350.2 448.2L350.7 448L351.1 448.2L351.6 448.2L352.1 448.5L352.6 448.3L353.1 447.7L353.6 447.3L354.1 447.9L354.6 447.8L355 447.8L355.5 448.2L356 448.1L356.5 448.3L357 448.3L357.5 448.1L358 448.5L358.5 447.9L358.9 448.1L359.4 447.9L359.9 448L360.4 447.3L360.9 447.7L361.4 448L361.9 448.1L362.4 448.5L362.9 448.2L363.3 448.4L363.8 448.3L364.3 448.3L364.8 448.2L365.3 448L365.8 448.1L366.3 447.8L366.8 448.2L367.2 447.8L367.7 448.1L368.2 448.5L368.7 448.1L369.2 448.1L369.7 448.3L370.2 448.1L370.6 447.8L371.1 448L371.6 447.9L372.1 447.9L372.6 447.5L373.1 448L373.6 447.9L374.1 447.6L374.5 447.8L375 447.7L375.5 448.1L376 447.8L376.5 448.1L377 447.9L377.5 447.9L378 448.1L378.4 448.2L378.9 447.9L379.4 447.8L379.9 448.1L380.4 448L380.9 448.1" stroke="#0c0cff" stroke-width="1.02" fill="none" stroke-linejoin="round"/><rect x="132.60" y="438.35" width="250.05" height="86.80" fill="none" stroke="#7f7f7f" stroke-width="1.7"/><path d="M381.75 429.20l9.8 9.9-9.8 9.9-9.8-9.9z" fill="#ff0000"/></svg>
<span class="t r" style="left:121.51px;top:520px;font-size:11.5px;color:#545454;transform:scaleX(1.2133);">0</span>
<span class="t r" style="left:101.66px;top:495px;font-size:11.5px;color:#545454;transform:scaleX(1.1654);">2500</span>
<span class="t r" style="left:101.46px;top:469px;font-size:11.5px;color:#545454;transform:scaleX(1.1746);">5000</span>
<span class="t r" style="left:101.32px;top:444px;font-size:11.5px;color:#545454;transform:scaleX(1.1808);">7500</span>
<span class="t r" style="left:129.46px;top:530px;font-size:11.5px;color:#545454;transform:scaleX(1.2133);">0</span>
<span class="t r" style="left:171.56px;top:530px;font-size:11.5px;color:#545454;transform:scaleX(1.1716);">200</span>
<span class="t r" style="left:220.65px;top:530px;font-size:11.5px;color:#545454;transform:scaleX(1.1514);">400</span>
<span class="t r" style="left:269.06px;top:530px;font-size:11.5px;color:#545454;transform:scaleX(1.1716);">600</span>
<span class="t r" style="left:317.88px;top:530px;font-size:11.5px;color:#545454;transform:scaleX(1.1675);">800</span>
<span class="t r" style="left:362.63px;top:530px;font-size:11.5px;color:#545454;transform:scaleX(1.1933);">1000</span>
<div style="left:286.25px;top:446.25px;width:14.50px;height:11.75px;border:1px solid #ccc"></div>
<div style="left:288.05px;top:447.80px;width:11.10px;height:8.50px;background:#0000ff"></div>
<span class="t r" style="left:303.79px;top:447px;font-size:11.5px;color:#8e8e8e;transform:scaleX(1.1545);">aida09 1.8.W</span>
<svg style="left:605px;top:425px" width="267" height="105" viewBox="605 425 267 105"><path d="M657.5 438.5V525.1M706.2 438.5V525.1M755 438.5V525.1M803.7 438.5V525.1M852.5 438.5V525.1M608.7 500.7H858.1M608.7 476.3H858.1M608.7 452H858.1" stroke="rgba(84,84,84,0.16)" stroke-width="0.9" fill="none"/><path d="M608.7 450.1L609.2 450L609.7 449.6L610.2 449.9L610.7 449.3L611.1 449.3L611.6 449L612.1 449L612.6 448.7L613.1 449.4L613.6 449.4L614.1 449L614.6 448.9L615 448.8L615.5 449.2L616 448.8L616.5 448.8L617 448.8L617.5 448.8L618 448.7L618.5 448.9L618.9 448.5L619.4 448.7L619.9 448.6L620.4 448.5L620.9 448.3L621.4 448.1L621.9 448.3L622.4 448.3L622.8 448.7L623.3 448.7L623.8 448.5L624.3 448.4L624.8 448.3L625.3 448.2L625.8 448.3L626.2 448.4L626.7 448.5L627.2 448.6L627.7 448.9L628.2 448.3L628.7 448.4L629.2 448.7L629.7 447.7L630.2 447.8L630.6 447.8L631.1 447.8L631.6 447.9L632.1 447.8L632.6 447.9L633.1 447.8L633.6 447.9L634.1 447.3L634.5 447.4L635 447.6L635.5 447.4L636 447.5L636.5 447.8L637 447.7L637.5 447.9L638 447.9L638.4 447.7L638.9 447.6L639.4 447.4L639.9 447L640.4 447.3L640.9 447.4L641.4 447.3L641.9 447.4L642.3 447.5L642.8 447.2L643.3 447.4L643.8 447.5L644.3 447.1L644.8 447.3L645.3 447.3L645.8 447.7L646.2 447.6L646.7 447.8L647.2 447.5L647.7 447.6L648.2 447.5L648.7 447.1L649.2 447.6L649.7 447.5L650.1 447.1L650.6 447.6L651.1 447.4L651.6 447.5L652.1 447.4L652.6 447L653.1 447.1L653.6 447.3L654 446.9L654.5 446.9L655 447L655.5 447.1L656 447.4L656.5 447.7L657 447.5L657.5 447.4L657.9 447.6L658.4 447.1L658.9 447.1L659.4 447.3L659.9 447.4L660.4 447.1L660.9 447.1L661.4 447.3L661.8 447.2L662.3 446.8L662.8 446.9L663.3 446.8L663.8 447.1L664.3 447.1L664.8 447.2L665.2 447.3L665.7 447.6L666.2 447.7L666.7 447.4L667.2 447.6L667.7 447.3L668.2 447.5L668.7 447.7L669.2 447.9L669.6 447.7L670.1 447.8L670.6 447.8L671.1 447.4L671.6 447.6L672.1 447.4L672.6 447.5L673.1 447.2L673.5 447.2L674 447.6L674.5 447.7L675 447.6L675.5 447.9L676 447.7L676.5 447.6L677 447.8L677.4 447.4L677.9 447.7L678.4 447.9L678.9 448.2L679.4 448L679.9 448.1L680.4 447.9L680.9 447.9L681.3 448.1L681.8 447.6L682.3 448.1L682.8 447.6L683.3 447.8L683.8 447.9L684.3 448.1L684.8 447.7L685.2 447.5L685.7 447.9L686.2 447.9L686.7 448L687.2 448.4L687.7 448.2L688.2 448.3L688.7 448.6L689.1 448.5L689.6 448.8L690.1 448.2L690.6 448.3L691.1 447.7L691.6 448.5L692.1 448.3L692.6 448.6L693 448.9L693.5 448.5L694 448.5L694.5 448.4L695 448.2L695.5 448.2L696 448.5L696.5 448.4L696.9 448.6L697.4 448.6L697.9 449L698.4 449L698.9 448.8L699.4 448.9L699.9 448.7L700.4 448.5L700.8 448.9L701.3 448.8L701.8 448.6L702.3 449L702.8 448.8L703.3 448.4L703.8 448.9L704.2 448.6L704.7 448.6L705.2 448.4L705.7 448.4L706.2 448.2L706.7 448.8L707.2 448.7L707.7 448.7L708.2 448.9L708.6 448.8L709.1 448.9L709.6 448.7L710.1 448.8L710.6 448.4L711.1 448.8L711.6 449.1L712.1 449.3L712.5 449L713 448.9L713.5 449.1L714 448.7L714.5 448.8L715 449L715.5 448.7L716 449L716.4 448.8L716.9 449L717.4 449L717.9 449L718.4 449.1L718.9 449.3L719.4 448.8L719.9 448.9L720.3 449.3L720.8 449.4L721.3 450.2L721.8 450.5L722.3 450.3L722.8 450L723.3 449L723.8 449L724.2 448.4L724.7 448.5L725.2 448.5L725.7 448.6L726.2 448.8L726.7 448.7L727.2 448.5L727.7 448.6L728.1 448.7L728.6 448.4L729.1 448.5L729.6 448.8L730.1 448.7L730.6 448.5L731.1 449.3L731.6 449.2L732 448.3L732.5 448.6L733 448.6L733.5 448.6L734 448.5L734.5 448.4L735 448.3L735.5 448.5L735.9 448.7L736.4 448.2L736.9 448.2L737.4 448.3L737.9 447.9L738.4 448.2L738.9 448.3L739.4 448.6L739.8 448.5L740.3 448.5L740.8 448.6L741.3 448.6L741.8 448.4L742.3 448.4L742.8 448.5L743.2 448.6L743.7 448.7L744.2 448.2L744.7 448.3L745.2 447.8L745.7 448.5L746.2 447.9L746.7 447.9L747.2 447.9L747.6 447.5L748.1 447.9L748.6 447.9L749.1 447.6L749.6 448.1L750.1 448.3L750.6 447.7L751.1 448.1L751.5 447.9L752 447.9L752.5 447.9L753 448.1L753.5 447.9L754 448.1L754.5 447.8L755 448L755.4 447.6L755.9 447.6L756.4 447.8L756.9 447.5L757.4 447.4L757.9 447.4L758.4 447.5L758.9 447.8L759.3 447.9L759.8 447.8L760.3 447.8L760.8 447.7L761.3 447.9L761.8 447.6L762.3 447.7L762.8 448L763.2 448L763.7 447.9L764.2 447.8L764.7 447.7L765.2 447.8L765.7 447.6L766.2 447.2L766.7 447.5L767.1 447.5L767.6 447.3L768.1 447.7L768.6 447.5L769.1 447.4L769.6 447.5L770.1 447.6L770.6 447.2L771 447.4L771.5 447.2L772 447.9L772.5 447.5L773 447.8L773.5 447.5L774 447.7L774.5 447.8L774.9 446.8L775.4 447.2L775.9 447.3L776.4 447.2L776.9 447.2L777.4 447.7L777.9 447.4L778.4 447L778.8 447.4L779.3 446.9L779.8 447.4L780.3 447.1L780.8 447.4L781.3 447.7L781.8 447.6L782.2 447.5L782.7 447.5L783.2 448L783.7 447.8L784.2 447.5L784.7 447.8L785.2 447.7L785.7 447.8L786.2 447.3L786.6 447.7L787.1 447.9L787.6 447.8L788.1 447.7L788.6 447L789.1 447.4L789.6 447.5L790.1 447.9L790.5 447.4L791 447.6L791.5 447.8L792 448L792.5 447.7L793 448L793.5 447.6L794 447.7L794.4 447.6L794.9 447.7L795.4 447.6L795.9 447.5L796.4 448L796.9 447.8L797.4 447.6L797.9 447.6L798.3 447.7L798.8 447.3L799.3 447.5L799.8 447.7L800.3 447.8L800.8 447.7L801.3 447.5L801.8 448.2L802.2 448L802.7 447.9L803.2 447.9L803.7 448L804.2 448L804.7 448L805.2 448.2L805.7 448.3L806.1 448.2L806.6 448.1L807.1 448.3L807.6 447.9L808.1 448.1L808.6 447.8L809.1 448.1L809.6 448.4L810 448.3L810.5 448.2L811 448.3L811.5 448.3L812 447.9L812.5 448.1L813 448.3L813.5 448.2L813.9 448.4L814.4 448.7L814.9 448.7L815.4 448.8L815.9 448.7L816.4 448.4L816.9 448.3L817.4 448.2L817.8 448.1L818.3 448.2L818.8 447.9L819.3 448.2L819.8 448.3L820.3 448.1L820.8 448.3L821.2 448.3L821.7 448.1L822.2 448.6L822.7 447.8L823.2 448.4L823.7 448.2L824.2 448.9L824.7 449.2L825.2 448.3L825.6 448.7L826.1 448.7L826.6 448.5L827.1 448.7L827.6 448.2L828.1 448.8L828.6 448.8L829.1 448.8L829.5 448.6L830 448.8L830.5 448.5L831 448.5L831.5 448.4L832 448.1L832.5 448.6L833 448.8L833.4 449L833.9 448.8L834.4 448.9L834.9 449L835.4 448.8L835.9 449L836.4 449.1L836.9 448.6L837.3 448.4L837.8 448.9L838.3 449.1L838.8 448.9L839.3 448.8L839.8 448.4L840.3 448.2L840.8 448.4L841.2 448.1L841.7 448L842.2 448.2L842.7 449L843.2 448.9L843.7 448.5L844.2 448.4L844.7 448.6L845.1 448.4L845.6 448.7L846.1 448.5L846.6 448.4L847.1 448.9L847.6 448.7L848.1 448.8L848.6 448.7L849 448.5L849.5 448.5L850 448.2L850.5 448L851 448L851.5 448.2L852 448.4L852.5 448.6L852.9 448.6L853.4 448.7L853.9 448.5L854.4 447.1L854.9 447.1L855.4 446.9L855.9 447.4L856.4 447.6L856.8 447.6" stroke="#0c0cff" stroke-width="1.02" fill="none" stroke-linejoin="round"/><rect x="608.55" y="438.35" width="250.05" height="86.80" fill="none" stroke="#7f7f7f" stroke-width="1.7"/><path d="M857.70 429.20l9.8 9.9-9.8 9.9-9.8-9.9z" fill="#ff0000"/></svg>
<span class="t r" style="left:597.71px;top:520px;font-size:11.5px;color:#545454;transform:scaleX(1.2133);">0</span>
<span class="t r" style="left:577.86px;top:496px;font-size:11.5px;color:#545454;transform:scaleX(1.1654);">2500</span>
<span class="t r" style="left:577.66px;top:471px;font-size:11.5px;color:#545454;transform:scaleX(1.1746);">5000</span>
<span class="t r" style="left:577.52px;top:447px;font-size:11.5px;color:#545454;transform:scaleX(1.1808);">7500</span>
<span class="t r" style="left:605.61px;top:530px;font-size:11.5px;color:#545454;transform:scaleX(1.2133);">0</span>
<span class="t r" style="left:647.71px;top:530px;font-size:11.5px;color:#545454;transform:scaleX(1.1716);">200</span>
<span class="t r" style="left:696.80px;top:530px;font-size:11.5px;color:#545454;transform:scaleX(1.1514);">400</span>
<span class="t r" style="left:745.21px;top:530px;font-size:11.5px;color:#545454;transform:scaleX(1.1716);">600</span>
<span class="t r" style="left:794.03px;top:530px;font-size:11.5px;color:#545454;transform:scaleX(1.1675);">800</span>
<span class="t r" style="left:838.78px;top:530px;font-size:11.5px;color:#545454;transform:scaleX(1.1933);">1000</span>
<div style="left:762.20px;top:446.25px;width:14.50px;height:11.75px;border:1px solid #ccc"></div>
<div style="left:764.00px;top:447.80px;width:11.10px;height:8.50px;background:#0000ff"></div>
<span class="t r" style="left:779.74px;top:447px;font-size:11.5px;color:#8e8e8e;transform:scaleX(1.1545);">aida01 1.8.W</span>
<svg style="left:1081px;top:425px" width="267" height="105" viewBox="1081 425 267 105"><path d="M1133.5 438.5V525.1M1182.3 438.5V525.1M1231 438.5V525.1M1279.8 438.5V525.1M1328.5 438.5V525.1M1084.8 501.2H1334.2M1084.8 477.5H1334.2M1084.8 453.8H1334.2" stroke="rgba(84,84,84,0.16)" stroke-width="0.9" fill="none"/><path d="M1084.8 450.2L1085.3 450.2L1085.8 450.6L1086.3 450.4L1086.8 450.6L1087.2 450.6L1087.7 450.5L1088.2 450.7L1088.7 450.3L1089.2 450.3L1089.7 450.1L1090.2 450.1L1090.6 450.6L1091.1 450.7L1091.6 450.3L1092.1 450.5L1092.6 450.7L1093.1 450.6L1093.6 450.7L1094.1 450.1L1094.5 450.2L1095 450.3L1095.5 450.4L1096 450.1L1096.5 449.8L1097 449.8L1097.5 449.7L1098 449.7L1098.5 450.2L1098.9 449.8L1099.4 450L1099.9 450.6L1100.4 450.4L1100.9 450.3L1101.4 450.1L1101.9 450.3L1102.3 450.6L1102.8 450.4L1103.3 450.5L1103.8 450.2L1104.3 450.4L1104.8 450.2L1105.3 450.4L1105.8 450.7L1106.2 450.2L1106.7 450.5L1107.2 450.6L1107.7 450.5L1108.2 450.5L1108.7 450.7L1109.2 450.9L1109.7 450.5L1110.1 450.4L1110.6 449.9L1111.1 450.6L1111.6 450.1L1112.1 450.1L1112.6 449.9L1113.1 450.2L1113.6 450L1114 450.3L1114.5 450.4L1115 450.3L1115.5 450.3L1116 450.1L1116.5 450.5L1117 450L1117.5 449.7L1118 450.1L1118.4 450L1118.9 449.9L1119.4 450.1L1119.9 450.3L1120.4 450.1L1120.9 450.3L1121.4 450.7L1121.8 450.6L1122.3 450.3L1122.8 450.4L1123.3 450.2L1123.8 450.2L1124.3 450.3L1124.8 450L1125.3 449.5L1125.8 450L1126.2 449.8L1126.7 450.2L1127.2 450L1127.7 450.2L1128.2 450.7L1128.7 450L1129.2 450L1129.6 449.9L1130.1 449.7L1130.6 449.8L1131.1 450.3L1131.6 450.1L1132.1 447.8L1132.6 446L1133.1 448L1133.5 451L1134 453.4L1134.5 453.1L1135 450.9L1135.5 448.9L1136 448.5L1136.5 450.1L1137 452L1137.5 452.9L1137.9 451.6L1138.4 449.4L1138.9 448.7L1139.4 449.2L1139.9 450.5L1140.4 451.3L1140.9 450.9L1141.3 450.1L1141.8 448.9L1142.3 449.5L1142.8 450.1L1143.3 450.5L1143.8 451.3L1144.3 450.6L1144.8 449.2L1145.2 449.7L1145.7 449.7L1146.2 450.5L1146.7 450.2L1147.2 450.6L1147.7 450.2L1148.2 449.9L1148.7 449.9L1149.1 450.5L1149.6 450.3L1150.1 450.5L1150.6 450.3L1151.1 450.1L1151.6 449.9L1152.1 450.2L1152.6 450.4L1153 450.4L1153.5 450.2L1154 450.1L1154.5 450.3L1155 450.3L1155.5 450.3L1156 450.4L1156.5 450.9L1157 450.3L1157.4 450.4L1157.9 450.4L1158.4 450.1L1158.9 450.4L1159.4 450L1159.9 450.4L1160.4 450.2L1160.8 449.8L1161.3 450.3L1161.8 450.1L1162.3 450.7L1162.8 450.4L1163.3 450.5L1163.8 450.6L1164.3 450.4L1164.8 450.5L1165.2 450.3L1165.7 450.6L1166.2 450.3L1166.7 450.3L1167.2 449.6L1167.7 450.4L1168.2 450.2L1168.6 449.8L1169.1 450.2L1169.6 450.3L1170.1 450.4L1170.6 449.9L1171.1 450.5L1171.6 450.1L1172.1 450.6L1172.5 450L1173 450.1L1173.5 449.8L1174 449.6L1174.5 450.1L1175 450.2L1175.5 450.4L1176 450.3L1176.5 450.1L1176.9 449.9L1177.4 450.2L1177.9 450.3L1178.4 450.3L1178.9 450.6L1179.4 450.5L1179.9 450.3L1180.3 450.4L1180.8 450.3L1181.3 450.4L1181.8 450.5L1182.3 450.6L1182.8 450.3L1183.3 450.1L1183.8 450.8L1184.2 450.5L1184.7 450.7L1185.2 450.1L1185.7 450.3L1186.2 450.3L1186.7 449.9L1187.2 450L1187.7 450.2L1188.1 450.3L1188.6 450.4L1189.1 449.9L1189.6 449.8L1190.1 450.3L1190.6 450.4L1191.1 450.3L1191.6 450L1192 450.5L1192.5 450.5L1193 450.4L1193.5 450.1L1194 450.3L1194.5 450.3L1195 450L1195.5 449.7L1196 450.2L1196.4 450.3L1196.9 450.3L1197.4 450.5L1197.9 450.2L1198.4 450.3L1198.9 450.2L1199.4 450.4L1199.8 450.6L1200.3 450.1L1200.8 450.5L1201.3 450.3L1201.8 450.1L1202.3 450.1L1202.8 450.4L1203.3 450L1203.8 450.1L1204.2 450L1204.7 450.4L1205.2 450.7L1205.7 450.5L1206.2 450.5L1206.7 450.4L1207.2 450.5L1207.6 450.1L1208.1 450.6L1208.6 450.3L1209.1 450.1L1209.6 450.2L1210.1 450.2L1210.6 450.7L1211.1 450.7L1211.5 450.2L1212 450.8L1212.5 450.7L1213 450.4L1213.5 450.1L1214 450.2L1214.5 450.1L1215 450.2L1215.5 450L1215.9 449.5L1216.4 450L1216.9 449.6L1217.4 450.2L1217.9 449.7L1218.4 449.9L1218.9 449.9L1219.3 450L1219.8 450.4L1220.3 450.3L1220.8 450.3L1221.3 450.2L1221.8 449.8L1222.3 450L1222.8 450L1223.2 449.9L1223.7 450.3L1224.2 450.1L1224.7 450.1L1225.2 450.1L1225.7 450L1226.2 450.6L1226.7 450.8L1227.1 450.5L1227.6 450.2L1228.1 449.8L1228.6 450.3L1229.1 450.5L1229.6 450.2L1230.1 450.3L1230.6 450.5L1231 450.4L1231.5 450.1L1232 450.5L1232.5 450.5L1233 450L1233.5 450.3L1234 450L1234.5 450.3L1235 450.4L1235.4 450L1235.9 449.8L1236.4 450.5L1236.9 450.3L1237.4 450.6L1237.9 450L1238.4 450.6L1238.8 450.8L1239.3 450.9L1239.8 450.4L1240.3 450.6L1240.8 450.5L1241.3 450.7L1241.8 450.6L1242.3 450.3L1242.8 449.9L1243.2 450.3L1243.7 449.9L1244.2 450.1L1244.7 450L1245.2 450.3L1245.7 450.3L1246.2 450L1246.6 450.2L1247.1 450.5L1247.6 450L1248.1 450.2L1248.6 450.4L1249.1 450.4L1249.6 450.2L1250.1 449.7L1250.5 449.8L1251 450.1L1251.5 450.2L1252 450.7L1252.5 450.1L1253 450.6L1253.5 450.6L1254 450.2L1254.5 450.4L1254.9 450.6L1255.4 450.5L1255.9 450.5L1256.4 450.6L1256.9 450.2L1257.4 450.5L1257.9 450.2L1258.3 450.2L1258.8 450.4L1259.3 450.2L1259.8 450.4L1260.3 450.7L1260.8 450.3L1261.3 450.3L1261.8 450.5L1262.2 450.2L1262.7 450.5L1263.2 449.9L1263.7 450.2L1264.2 449.9L1264.7 449.8L1265.2 450.4L1265.7 449.9L1266.1 450.5L1266.6 450.3L1267.1 450.6L1267.6 450.1L1268.1 450.6L1268.6 450.7L1269.1 450.4L1269.6 450.3L1270 450.9L1270.5 450.3L1271 450.1L1271.5 450L1272 450.2L1272.5 450.2L1273 450.2L1273.5 450.5L1274 450.1L1274.4 450.3L1274.9 450.6L1275.4 450L1275.9 450.5L1276.4 450.6L1276.9 449.9L1277.4 449.9L1277.8 449.9L1278.3 449.6L1278.8 450.2L1279.3 449.7L1279.8 450.2L1280.3 450.5L1280.8 450L1281.3 450.3L1281.8 450.1L1282.2 450.7L1282.7 450.4L1283.2 450.5L1283.7 450.6L1284.2 450.6L1284.7 450.4L1285.2 450.4L1285.6 450.2L1286.1 450.4L1286.6 450.1L1287.1 450.3L1287.6 449.9L1288.1 450.2L1288.6 450.8L1289.1 450.4L1289.5 450L1290 450.3L1290.5 450L1291 449.7L1291.5 449.9L1292 450.1L1292.5 450L1293 449.8L1293.5 449.7L1293.9 449.7L1294.4 450.3L1294.9 450.1L1295.4 449.9L1295.9 449.8L1296.4 450L1296.9 450.9L1297.3 450.1L1297.8 450.3L1298.3 450.3L1298.8 450.2L1299.3 450.2L1299.8 449.9L1300.3 450L1300.8 450.6L1301.2 450.2L1301.7 450.6L1302.2 450.1L1302.7 450.4L1303.2 450.5L1303.7 450.7L1304.2 450.2L1304.7 450.5L1305.1 450.4L1305.6 450L1306.1 450.3L1306.6 449.9L1307.1 449.9L1307.6 450.1L1308.1 449.5L1308.6 450.2L1309 450.1L1309.5 450L1310 450.3L1310.5 450.6L1311 450.3L1311.5 450.7L1312 450.1L1312.5 450L1313 450.6L1313.4 450.3L1313.9 450.4L1314.4 450.1L1314.9 450.4L1315.4 450.4L1315.9 450.5L1316.4 450.4L1316.8 450.6L1317.3 450.2L1317.8 450.1L1318.3 449.9L1318.8 450.4L1319.3 449.9L1319.8 449.8L1320.3 449.7L1320.8 449.8L1321.2 449.6L1321.7 449.8L1322.2 449.8L1322.7 449.9L1323.2 449.9L1323.7 450.2L1324.2 450.1L1324.6 450.3L1325.1 450.3L1325.6 450.4L1326.1 449.8L1326.6 450.1L1327.1 450.1L1327.6 450.4L1328.1 449.9L1328.5 450.2L1329 450.3L1329.5 450.4L1330 450.8L1330.5 450.5L1331 450.8L1331.5 450.3L1332 450.2L1332.5 450.8L1332.9 450.5" stroke="#0c0cff" stroke-width="1.02" fill="none" stroke-linejoin="round"/><rect x="1084.65" y="438.35" width="250.05" height="86.80" fill="none" stroke="#7f7f7f" stroke-width="1.7"/><path d="M1333.80 429.20l9.8 9.9-9.8 9.9-9.8-9.9z" fill="#ff0000"/></svg>
<span class="t r" style="left:1074.11px;top:520px;font-size:11.5px;color:#545454;transform:scaleX(1.2133);">0</span>
<span class="t r" style="left:1054.26px;top:496px;font-size:11.5px;color:#545454;transform:scaleX(1.1654);">2500</span>
<span class="t r" style="left:1054.06px;top:471px;font-size:11.5px;color:#545454;transform:scaleX(1.1746);">5000</span>
<span class="t r" style="left:1053.92px;top:449px;font-size:11.5px;color:#545454;transform:scaleX(1.1808);">7500</span>
<span class="t r" style="left:1082.11px;top:530px;font-size:11.5px;color:#545454;transform:scaleX(1.2133);">0</span>
<span class="t r" style="left:1124.21px;top:530px;font-size:11.5px;color:#545454;transform:scaleX(1.1716);">200</span>
<span class="t r" style="left:1173.30px;top:530px;font-size:11.5px;color:#545454;transform:scaleX(1.1514);">400</span>
<span class="t r" style="left:1221.71px;top:530px;font-size:11.5px;color:#545454;transform:scaleX(1.1716);">600</span>
<span class="t r" style="left:1270.53px;top:530px;font-size:11.5px;color:#545454;transform:scaleX(1.1675);">800</span>
<span class="t r" style="left:1315.28px;top:530px;font-size:11.5px;color:#545454;transform:scaleX(1.1933);">1000</span>
<div style="left:1238.30px;top:446.25px;width:14.50px;height:11.75px;border:1px solid #ccc"></div>
<div style="left:1240.10px;top:447.80px;width:11.10px;height:8.50px;background:#0000ff"></div>
<span class="t r" style="left:1255.84px;top:447px;font-size:11.5px;color:#8e8e8e;transform:scaleX(1.1545);">aida05 1.8.W</span>
<svg style="left:129px;top:547px" width="267" height="105" viewBox="129 547 267 105"><path d="M181.5 560.5V647.1M230.2 560.5V647.1M279 560.5V647.1M327.8 560.5V647.1M376.5 560.5V647.1M132.8 622H382.1M132.8 597H382.1M132.8 572H382.1" stroke="rgba(84,84,84,0.16)" stroke-width="0.9" fill="none"/><path d="M132.8 569.6L133.2 569.5L133.7 569.6L134.2 569.3L134.7 569.6L135.2 569.4L135.7 569.6L136.2 569.5L136.7 569.2L137.1 569.3L137.6 569.6L138.1 569.5L138.6 569.4L139.1 569.5L139.6 569.4L140.1 569.4L140.6 569.5L141 569.5L141.5 569.7L142 569.5L142.5 569.7L143 569.7L143.5 569.7L144 569.6L144.4 569.5L144.9 569.5L145.4 569.5L145.9 569.4L146.4 569.5L146.9 569.4L147.4 569.7L147.9 569.6L148.3 569.4L148.8 569.3L149.3 569.5L149.8 569.4L150.3 569.4L150.8 569.4L151.3 569.2L151.8 569.6L152.2 569.5L152.7 569.8L153.2 569.5L153.7 569.5L154.2 569.7L154.7 569.5L155.2 569.5L155.7 569.5L156.2 569.4L156.6 569.7L157.1 569.6L157.6 569.7L158.1 569.5L158.6 569.5L159.1 569.4L159.6 569.6L160.1 569.3L160.5 569.6L161 569.6L161.5 569.7L162 569.4L162.5 569.6L163 569.4L163.5 569.4L163.9 569.3L164.4 569.7L164.9 569.7L165.4 569.4L165.9 569.4L166.4 569.5L166.9 569.8L167.4 569.6L167.8 569.4L168.3 569.3L168.8 569.4L169.3 569.7L169.8 569.7L170.3 569.5L170.8 569.4L171.3 569.4L171.8 569.3L172.2 569.6L172.7 569.4L173.2 569.6L173.7 569.3L174.2 569.3L174.7 569.5L175.2 569.4L175.7 569.6L176.1 569.5L176.6 569.3L177.1 569.6L177.6 569.6L178.1 569.3L178.6 569.7L179.1 569.6L179.6 569.6L180 569.3L180.5 569.4L181 569.5L181.5 579.1L182 592.7L182.5 601.8L183 607.5L183.4 611.7L183.9 614.4L184.4 616L184.9 617.4L185.4 618.5L185.9 619.3L186.4 619.7L186.9 619.9L187.3 620.1L187.8 620.5L188.3 620.7L188.8 621L189.3 621.2L189.8 621.5L190.3 621.5L190.8 621.5L191.2 621.9L191.7 621.9L192.2 621.9L192.7 621.9L193.2 621.8L193.7 622L194.2 622.3L194.7 622.1L195.2 622.1L195.6 622.3L196.1 622.4L196.6 622.4L197.1 622.5L197.6 622.6L198.1 622.3L198.6 622.6L199.1 622.3L199.5 622.6L200 622.5L200.5 622.5L201 622.6L201.5 622.5L202 622.6L202.5 622.6L202.9 622.5L203.4 622.4L203.9 622.4L204.4 622.4L204.9 622.4L205.4 622.4L205.9 622.8L206.4 622.5L206.8 622.5L207.3 622.3L207.8 622.3L208.3 622.3L208.8 622.4L209.3 622.2L209.8 622.5L210.3 622.2L210.8 622.4L211.2 621.9L211.7 622.2L212.2 622.3L212.7 622.2L213.2 622.3L213.7 622.2L214.2 622.2L214.6 621.9L215.1 622L215.6 621.8L216.1 622.1L216.6 622.1L217.1 622L217.6 621.9L218.1 621.9L218.6 622.2L219 622.1L219.5 621.9L220 622L220.5 621.6L221 621.6L221.5 621.7L222 621.7L222.4 621.7L222.9 621.8L223.4 622.1L223.9 621.6L224.4 621.7L224.9 621.7L225.4 621.6L225.9 621.7L226.3 621.8L226.8 621.4L227.3 621.6L227.8 621.5L228.3 621.5L228.8 621.3L229.3 621.2L229.8 621.1L230.2 621.5L230.7 621.4L231.2 621.4L231.7 621L232.2 621.3L232.7 621.2L233.2 621.1L233.7 621.1L234.1 621.3L234.6 621.3L235.1 621.2L235.6 621.2L236.1 621L236.6 621.1L237.1 621.1L237.6 621.1L238.1 621L238.5 621L239 621L239.5 620.9L240 621.2L240.5 621L241 620.9L241.5 621.2L241.9 621L242.4 620.6L242.9 620.9L243.4 620.9L243.9 621L244.4 620.9L244.9 620.8L245.4 620.5L245.8 620.5L246.3 620.7L246.8 620.7L247.3 620.4L247.8 620.5L248.3 620.5L248.8 620.5L249.3 620.5L249.8 620.4L250.2 620.3L250.7 620.6L251.2 620.6L251.7 620.4L252.2 620.5L252.7 620.4L253.2 620.4L253.6 620.3L254.1 620.2L254.6 620.3L255.1 620.3L255.6 620.1L256.1 620.4L256.6 620.4L257.1 620.3L257.6 620.3L258 620.2L258.5 620L259 619.9L259.5 619.9L260 620L260.5 619.9L261 620L261.4 619.6L261.9 620.2L262.4 620.1L262.9 619.8L263.4 619.9L263.9 619.8L264.4 619.8L264.9 619.7L265.4 619.7L265.8 619.6L266.3 619.7L266.8 619.6L267.3 619.7L267.8 619.5L268.3 619.6L268.8 619.6L269.2 619.6L269.7 619.4L270.2 619.5L270.7 619.6L271.2 619.5L271.7 619.4L272.2 619.3L272.7 619.3L273.1 619.4L273.6 619.5L274.1 619.3L274.6 619.2L275.1 619.3L275.6 619.2L276.1 619.1L276.6 619.1L277 619.1L277.5 619.2L278 618.9L278.5 618.9L279 619.1L279.5 618.9L280 619L280.5 619L280.9 619L281.4 618.8L281.9 618.9L282.4 618.9L282.9 618.9L283.4 618.7L283.9 619L284.4 618.6L284.9 618.8L285.3 618.8L285.8 618.9L286.3 618.6L286.8 618.8L287.3 618.6L287.8 618.7L288.3 618.8L288.8 618.5L289.2 618.6L289.7 618.4L290.2 618.6L290.7 618.7L291.2 618.5L291.7 618.3L292.2 618.5L292.6 618.6L293.1 618.5L293.6 618.5L294.1 618.1L294.6 618.2L295.1 618.5L295.6 618.1L296.1 618.4L296.5 618.5L297 618.3L297.5 618.3L298 618.1L298.5 618L299 618.1L299.5 618L300 618L300.4 618.1L300.9 618L301.4 618L301.9 618L302.4 617.9L302.9 618.2L303.4 617.9L303.9 617.9L304.4 617.8L304.8 617.7L305.3 618L305.8 617.8L306.3 617.6L306.8 617.7L307.3 617.7L307.8 617.6L308.2 617.8L308.7 617.5L309.2 617.7L309.7 617.6L310.2 617.4L310.7 617.5L311.2 617.5L311.7 617.6L312.1 617.4L312.6 617.5L313.1 617.2L313.6 617.3L314.1 617.5L314.6 617.5L315.1 617.3L315.6 617.2L316 617.4L316.5 617L317 617.1L317.5 617.3L318 617.3L318.5 617L319 616.9L319.5 617.3L319.9 617.1L320.4 617L320.9 617.1L321.4 617.1L321.9 616.7L322.4 617.1L322.9 617L323.4 616.7L323.9 617L324.3 616.7L324.8 617L325.3 616.9L325.8 617.1L326.3 616.7L326.8 616.8L327.3 616.9L327.8 616.6L328.2 616.6L328.7 616.6L329.2 616.6L329.7 616.5L330.2 616.7L330.7 616.6L331.2 616.6L331.6 616.8L332.1 616.5L332.6 616.7L333.1 616.4L333.6 616.5L334.1 616.2L334.6 616.4L335.1 616.3L335.5 616.3L336 616.2L336.5 616.3L337 616.2L337.5 616L338 612.1L338.5 605L339 599.1L339.4 594.1L339.9 590.1L340.4 586.8L340.9 583.8L341.4 581.4L341.9 579.6L342.4 577.9L342.9 576.5L343.4 575.4L343.8 574.2L344.3 573.4L344.8 572.9L345.3 572.1L345.8 571.7L346.3 571.4L346.8 571L347.2 570.6L347.7 570.5L348.2 570.2L348.7 570.1L349.2 570L349.7 569.8L350.2 569.6L350.7 569.3L351.1 569.1L351.6 569.1L352.1 569.2L352.6 569.2L353.1 568.8L353.6 569L354.1 568.7L354.6 568.7L355 568.8L355.5 568.9L356 568.8L356.5 568.9L357 568.6L357.5 568.9L358 568.9L358.5 568.8L358.9 568.9L359.4 568.8L359.9 568.8L360.4 568.9L360.9 568.9L361.4 569.4L361.9 569L362.4 569.3L362.9 569.2L363.3 569.2L363.8 569.3L364.3 569.2L364.8 569.4L365.3 569.4L365.8 569.2L366.3 569.5L366.8 569.5L367.2 569.5L367.7 569.6L368.2 569.4L368.7 569.5L369.2 569.6L369.7 569.4L370.2 569.6L370.6 569.3L371.1 569.3L371.6 569.6L372.1 569.4L372.6 569.5L373.1 569.3L373.6 569.5L374.1 569.4L374.5 569.5L375 569.3L375.5 569.6L376 569.5L376.5 569.5L377 569.5L377.5 569.5L378 569.3L378.4 569.2L378.9 569.5L379.4 569.4L379.9 569.4L380.4 569.6L380.9 569.2" stroke="#0c0cff" stroke-width="1.02" fill="none" stroke-linejoin="round"/><rect x="132.60" y="560.35" width="250.05" height="86.80" fill="none" stroke="#7f7f7f" stroke-width="1.7"/><path d="M381.75 551.20l9.8 9.9-9.8 9.9-9.8-9.9z" fill="#ff0000"/></svg>
<span class="t r" style="left:121.51px;top:642px;font-size:11.5px;color:#545454;transform:scaleX(1.2133);">0</span>
<span class="t r" style="left:101.66px;top:617px;font-size:11.5px;color:#545454;transform:scaleX(1.1654);">2500</span>
<span class="t r" style="left:101.46px;top:592px;font-size:11.5px;color:#545454;transform:scaleX(1.1746);">5000</span>
<span class="t r" style="left:101.32px;top:567px;font-size:11.5px;color:#545454;transform:scaleX(1.1808);">7500</span>
<span class="t r" style="left:129.46px;top:652px;font-size:11.5px;color:#545454;transform:scaleX(1.2133);">0</span>
<span class="t r" style="left:171.56px;top:652px;font-size:11.5px;color:#545454;transform:scaleX(1.1716);">200</span>
<span class="t r" style="left:220.65px;top:652px;font-size:11.5px;color:#545454;transform:scaleX(1.1514);">400</span>
<span class="t r" style="left:269.06px;top:652px;font-size:11.5px;color:#545454;transform:scaleX(1.1716);">600</span>
<span class="t r" style="left:317.88px;top:652px;font-size:11.5px;color:#545454;transform:scaleX(1.1675);">800</span>
<span class="t r" style="left:362.63px;top:652px;font-size:11.5px;color:#545454;transform:scaleX(1.1933);">1000</span>
<div style="left:286.25px;top:568.25px;width:14.50px;height:11.75px;border:1px solid #ccc"></div>
<div style="left:288.05px;top:569.80px;width:11.10px;height:8.50px;background:#0000ff"></div>
<span class="t r" style="left:303.79px;top:569px;font-size:11.5px;color:#8e8e8e;transform:scaleX(1.1545);">aida15 1.8.W</span>
<svg style="left:605px;top:547px" width="267" height="105" viewBox="605 547 267 105"><path d="M657.5 560.5V647.1M706.2 560.5V647.1M755 560.5V647.1M803.7 560.5V647.1M852.5 560.5V647.1M608.7 624H858.1M608.7 601H858.1M608.7 578H858.1" stroke="rgba(84,84,84,0.16)" stroke-width="0.9" fill="none"/><path d="M608.7 575.3L609.2 575.6L609.7 575.3L610.2 575.1L610.7 575.2L611.1 575.1L611.6 575L612.1 575.1L612.6 574.9L613.1 575.1L613.6 575.2L614.1 575L614.6 575.2L615 575.4L615.5 575.5L616 575.4L616.5 575.6L617 575.2L617.5 575.2L618 575.4L618.5 575.6L618.9 575.2L619.4 575L619.9 575.4L620.4 575.5L620.9 575.2L621.4 575.2L621.9 575.1L622.4 575.3L622.8 575.6L623.3 575.4L623.8 575.5L624.3 575.8L624.8 575L625.3 575.1L625.8 575.3L626.2 575.2L626.7 575.2L627.2 574.9L627.7 574.9L628.2 575L628.7 575L629.2 574.9L629.7 574.9L630.2 574.7L630.6 576.1L631.1 573.9L631.6 574.2L632.1 574.9L632.6 575.3L633.1 575.2L633.6 575.2L634.1 574.8L634.5 574.8L635 574.9L635.5 574.7L636 574.9L636.5 575.1L637 575.4L637.5 574.7L638 575.3L638.4 575.5L638.9 575.3L639.4 575.5L639.9 575.5L640.4 575.4L640.9 575.5L641.4 575.5L641.9 575.6L642.3 575.2L642.8 575L643.3 575.1L643.8 575L644.3 575.2L644.8 574.8L645.3 575.4L645.8 575L646.2 574.9L646.7 575L647.2 575.2L647.7 575L648.2 575.1L648.7 575.1L649.2 575.2L649.7 575.2L650.1 574.9L650.6 575.1L651.1 575.2L651.6 575.3L652.1 575.1L652.6 575.1L653.1 575.3L653.6 574.9L654 575.3L654.5 575.6L655 575.2L655.5 575.4L656 575.8L656.5 575.5L657 575.8L657.5 576.9L657.9 576.5L658.4 575.2L658.9 569.5L659.4 570L659.9 574.3L660.4 577.6L660.9 578.2L661.4 576.2L661.8 574L662.3 573.5L662.8 574.4L663.3 575.5L663.8 576.5L664.3 574.3L664.8 572.7L665.2 572.2L665.7 572.5L666.2 574L666.7 575.5L667.2 576.1L667.7 577.2L668.2 577.1L668.7 576.8L669.2 576.3L669.6 575.3L670.1 574.8L670.6 574.1L671.1 573.9L671.6 574.4L672.1 574.5L672.6 575.6L673.1 576L673.5 576.2L674 576L674.5 575.7L675 575.6L675.5 575L676 574.7L676.5 574.3L677 574.5L677.4 574.2L677.9 574.7L678.4 575.1L678.9 575.5L679.4 575.5L679.9 575.6L680.4 575.4L680.9 575.1L681.3 575L681.8 575L682.3 574.4L682.8 574.4L683.3 574.4L683.8 574.7L684.3 574.8L684.8 574.6L685.2 575.1L685.7 575.4L686.2 575.5L686.7 575.2L687.2 575.4L687.7 575.4L688.2 575.4L688.7 575.1L689.1 575.1L689.6 575.4L690.1 575.2L690.6 575.4L691.1 575.3L691.6 575.3L692.1 575.2L692.6 575.2L693 575.1L693.5 575.2L694 575.1L694.5 575.1L695 575.3L695.5 575.2L696 575.4L696.5 575.4L696.9 575.3L697.4 575.1L697.9 575.1L698.4 575.7L698.9 575.1L699.4 575L699.9 574.8L700.4 574.7L700.8 574.7L701.3 575.2L701.8 575.1L702.3 575.2L702.8 575.2L703.3 575.8L703.8 575.7L704.2 575.6L704.7 575.4L705.2 575.7L705.7 575.6L706.2 575.2L706.7 575.5L707.2 575.3L707.7 575.4L708.2 575.3L708.6 575.4L709.1 575.6L709.6 575.3L710.1 575.7L710.6 575.4L711.1 575.3L711.6 575.2L712.1 575.4L712.5 575.3L713 575.3L713.5 575.4L714 575.3L714.5 574.7L715 574.9L715.5 575.2L716 574.9L716.4 574.9L716.9 575L717.4 575L717.9 574.8L718.4 575.2L718.9 575.6L719.4 575.2L719.9 575.5L720.3 575.2L720.8 575.1L721.3 575.1L721.8 574.9L722.3 575.2L722.8 574.8L723.3 575L723.8 575L724.2 574.9L724.7 575L725.2 575L725.7 575L726.2 575.2L726.7 575.4L727.2 575.3L727.7 575.3L728.1 575.6L728.6 575L729.1 575L729.6 574.9L730.1 574.9L730.6 575.1L731.1 574.6L731.6 575L732 574.7L732.5 574.6L733 575L733.5 574.7L734 575L734.5 575.2L735 575.1L735.5 575.2L735.9 575.3L736.4 575.2L736.9 575.6L737.4 575L737.9 575L738.4 575.4L738.9 575.5L739.4 575.3L739.8 575.2L740.3 575.3L740.8 575.3L741.3 575.3L741.8 575.6L742.3 575.8L742.8 575.4L743.2 575.6L743.7 575.7L744.2 575.5L744.7 575.2L745.2 575.4L745.7 575.5L746.2 575.3L746.7 574.9L747.2 575.1L747.6 575L748.1 574.8L748.6 575.1L749.1 575.5L749.6 575.4L750.1 576L750.6 575.1L751.1 575.6L751.5 577.6L752 575.1L752.5 575.8L753 575.6L753.5 576.2L754 574.9L754.5 575.1L755 575.6L755.4 575.2L755.9 575.5L756.4 575.3L756.9 575.3L757.4 575.3L757.9 576L758.4 575.7L758.9 575.5L759.3 575.4L759.8 575.4L760.3 575L760.8 575.3L761.3 574.8L761.8 575L762.3 574.8L762.8 574.7L763.2 574.9L763.7 574.7L764.2 575.1L764.7 574.5L765.2 574.9L765.7 575.1L766.2 575.1L766.7 574.8L767.1 575.2L767.6 575L768.1 575L768.6 575L769.1 574.8L769.6 575.3L770.1 574.9L770.6 574.9L771 575.2L771.5 575.3L772 575L772.5 575.1L773 575.3L773.5 575.3L774 575L774.5 575.4L774.9 575.6L775.4 575.6L775.9 575.1L776.4 575.3L776.9 574.7L777.4 575.5L777.9 575.3L778.4 575.2L778.8 575L779.3 575.1L779.8 574.9L780.3 574.9L780.8 574.9L781.3 575.3L781.8 575.2L782.2 575.1L782.7 575.1L783.2 575.2L783.7 575.5L784.2 575.5L784.7 575.1L785.2 574.9L785.7 575.3L786.2 575.3L786.6 575.2L787.1 575.1L787.6 575.4L788.1 575.1L788.6 575.1L789.1 575.4L789.6 575.3L790.1 575.6L790.5 575.4L791 575.4L791.5 575.8L792 575.6L792.5 575.8L793 575.6L793.5 575.6L794 575.5L794.4 575.1L794.9 575L795.4 575.1L795.9 575.3L796.4 575.1L796.9 575.4L797.4 574.9L797.9 575L798.3 575.5L798.8 575.3L799.3 575.7L799.8 575.3L800.3 575.5L800.8 575.1L801.3 575L801.8 575.3L802.2 575.1L802.7 575.3L803.2 574.9L803.7 575.1L804.2 575.3L804.7 575.2L805.2 575.4L805.7 575.1L806.1 576L806.6 574.9L807.1 575.5L807.6 575.5L808.1 575.2L808.6 574.9L809.1 575.3L809.6 575L810 574.8L810.5 574.7L811 574.8L811.5 575.3L812 575.1L812.5 574.9L813 575.1L813.5 575.1L813.9 575L814.4 575.2L814.9 575L815.4 575.1L815.9 574.8L816.4 574.8L816.9 575.1L817.4 575L817.8 574.9L818.3 575L818.8 574.6L819.3 574.8L819.8 575L820.3 575.1L820.8 575.1L821.2 575.3L821.7 575.3L822.2 575.4L822.7 575.4L823.2 575.3L823.7 575.3L824.2 575.7L824.7 575L825.2 575.7L825.6 575.2L826.1 575.2L826.6 575.3L827.1 575.3L827.6 575.2L828.1 575.3L828.6 574.8L829.1 575.3L829.5 575.4L830 575L830.5 575.2L831 575.1L831.5 575.4L832 575.1L832.5 575.4L833 575.6L833.4 574.8L833.9 574.8L834.4 574.2L834.9 574.9L835.4 574.9L835.9 574.5L836.4 575.6L836.9 574.7L837.3 575.5L837.8 575L838.3 575.5L838.8 575.7L839.3 575.2L839.8 575.5L840.3 575.3L840.8 575.7L841.2 575.5L841.7 575.3L842.2 575.6L842.7 574.5L843.2 574.9L843.7 575L844.2 575.2L844.7 575.2L845.1 575.2L845.6 575L846.1 575L846.6 575L847.1 575.5L847.6 574.9L848.1 575.3L848.6 574.8L849 575.2L849.5 574.8L850 574.7L850.5 574.8L851 574.6L851.5 574.9L852 574.8L852.5 574.7L852.9 575.1L853.4 575.2L853.9 575.1L854.4 575.2L854.9 575.2L855.4 575.2L855.9 575.1L856.4 575.3L856.8 575.6" stroke="#0c0cff" stroke-width="1.02" fill="none" stroke-linejoin="round"/><rect x="608.55" y="560.35" width="250.05" height="86.80" fill="none" stroke="#7f7f7f" stroke-width="1.7"/><path d="M857.70 551.20l9.8 9.9-9.8 9.9-9.8-9.9z" fill="#ff0000"/></svg>
<span class="t r" style="left:597.71px;top:642px;font-size:11.5px;color:#545454;transform:scaleX(1.2133);">0</span>
<span class="t r" style="left:577.86px;top:618px;font-size:11.5px;color:#545454;transform:scaleX(1.1654);">2500</span>
<span class="t r" style="left:577.66px;top:596px;font-size:11.5px;color:#545454;transform:scaleX(1.1746);">5000</span>
<span class="t r" style="left:577.52px;top:573px;font-size:11.5px;color:#545454;transform:scaleX(1.1808);">7500</span>
<span class="t r" style="left:605.61px;top:652px;font-size:11.5px;color:#545454;transform:scaleX(1.2133);">0</span>
<span class="t r" style="left:647.71px;top:652px;font-size:11.5px;color:#545454;transform:scaleX(1.1716);">200</span>
<span class="t r" style="left:696.80px;top:652px;font-size:11.5px;color:#545454;transform:scaleX(1.1514);">400</span>
<span class="t r" style="left:745.21px;top:652px;font-size:11.5px;color:#545454;transform:scaleX(1.1716);">600</span>
<span class="t r" style="left:794.03px;top:652px;font-size:11.5px;color:#545454;transform:scaleX(1.1675);">800</span>
<span class="t r" style="left:838.78px;top:652px;font-size:11.5px;color:#545454;transform:scaleX(1.1933);">1000</span>
<div style="left:762.20px;top:568.25px;width:14.50px;height:11.75px;border:1px solid #ccc"></div>
<div style="left:764.00px;top:569.80px;width:11.10px;height:8.50px;background:#0000ff"></div>
<span class="t r" style="left:779.74px;top:569px;font-size:11.5px;color:#8e8e8e;transform:scaleX(1.1545);">aida03 1.8.W</span>
<svg style="left:1081px;top:547px" width="267" height="105" viewBox="1081 547 267 105"><path d="M1133.5 560.5V647.1M1182.3 560.5V647.1M1231 560.5V647.1M1279.8 560.5V647.1M1328.5 560.5V647.1M1084.8 622.6H1334.2M1084.8 598.2H1334.2M1084.8 573.8H1334.2" stroke="rgba(84,84,84,0.16)" stroke-width="0.9" fill="none"/><path d="M1084.8 572L1085.3 571.8L1085.8 571.8L1086.3 571.8L1086.8 572L1087.2 572.2L1087.7 571.9L1088.2 572.3L1088.7 572.1L1089.2 572.5L1089.7 572.4L1090.2 571.8L1090.6 571.7L1091.1 571.6L1091.6 571.8L1092.1 571.7L1092.6 572.3L1093.1 571.9L1093.6 571.9L1094.1 572L1094.5 571.9L1095 572.2L1095.5 571.9L1096 572.1L1096.5 572.1L1097 572L1097.5 572L1098 572.2L1098.5 572.8L1098.9 572.6L1099.4 571.8L1099.9 572.2L1100.4 572.3L1100.9 572.1L1101.4 572.1L1101.9 571.7L1102.3 572.3L1102.8 572L1103.3 571.9L1103.8 572.2L1104.3 572.1L1104.8 571.9L1105.3 571.8L1105.8 572L1106.2 571.6L1106.7 571.8L1107.2 571.8L1107.7 572.5L1108.2 572.1L1108.7 572.3L1109.2 572.5L1109.7 572L1110.1 572.2L1110.6 571.8L1111.1 571.8L1111.6 571.8L1112.1 572.2L1112.6 571.7L1113.1 571.9L1113.6 572.1L1114 572L1114.5 571.6L1115 572L1115.5 571.6L1116 571.9L1116.5 572.1L1117 572.1L1117.5 572.2L1118 572.4L1118.4 572.2L1118.9 572.3L1119.4 572.6L1119.9 572.1L1120.4 572.2L1120.9 572L1121.4 572.1L1121.8 571.8L1122.3 572.3L1122.8 572.1L1123.3 572.1L1123.8 572.6L1124.3 572.3L1124.8 572.4L1125.3 571.8L1125.8 572.1L1126.2 571.8L1126.7 572.1L1127.2 571.7L1127.7 572.1L1128.2 572L1128.7 572.2L1129.2 572.5L1129.6 571.9L1130.1 572.3L1130.6 568.8L1131.1 569.6L1131.6 572.7L1132.1 574.3L1132.6 573.1L1133.1 571.2L1133.5 570.7L1134 572L1134.5 573.1L1135 573.2L1135.5 572.3L1136 571.2L1136.5 571.3L1137 571.9L1137.5 572.2L1137.9 572.1L1138.4 571.5L1138.9 571.7L1139.4 571.9L1139.9 571.8L1140.4 572.1L1140.9 571.8L1141.3 571.6L1141.8 571.7L1142.3 571.8L1142.8 571.9L1143.3 571.8L1143.8 572.3L1144.3 572.4L1144.8 572.6L1145.2 572.4L1145.7 571.7L1146.2 572L1146.7 571.9L1147.2 571.9L1147.7 572L1148.2 571.7L1148.7 571.9L1149.1 571.9L1149.6 572.1L1150.1 572.5L1150.6 572L1151.1 572.5L1151.6 572L1152.1 571.9L1152.6 571.8L1153 572.5L1153.5 571.5L1154 572.2L1154.5 572.3L1155 572.3L1155.5 572.2L1156 572.3L1156.5 572.1L1157 572.4L1157.4 572.1L1157.9 571.8L1158.4 572.3L1158.9 572.5L1159.4 572.1L1159.9 572.4L1160.4 572.1L1160.8 572.1L1161.3 572L1161.8 571.8L1162.3 571.9L1162.8 572.1L1163.3 571.8L1163.8 571.5L1164.3 572L1164.8 572.2L1165.2 572.4L1165.7 572.4L1166.2 572.3L1166.7 572.1L1167.2 571.7L1167.7 571.9L1168.2 572.2L1168.6 571.9L1169.1 571.5L1169.6 571.7L1170.1 572.2L1170.6 572.3L1171.1 572L1171.6 571.8L1172.1 572L1172.5 571.2L1173 571.4L1173.5 571.6L1174 571.6L1174.5 571.8L1175 572.1L1175.5 572.1L1176 572.1L1176.5 572.6L1176.9 572L1177.4 571.9L1177.9 572.2L1178.4 572L1178.9 572.1L1179.4 572.1L1179.9 572.1L1180.3 572.5L1180.8 572.7L1181.3 572.4L1181.8 572.3L1182.3 572L1182.8 571.8L1183.3 572.1L1183.8 571.8L1184.2 572.2L1184.7 571.8L1185.2 571.5L1185.7 572.1L1186.2 572.1L1186.7 572.1L1187.2 572.3L1187.7 572L1188.1 571.7L1188.6 571.5L1189.1 572.5L1189.6 572L1190.1 572L1190.6 572.2L1191.1 572L1191.6 572.4L1192 572.3L1192.5 571.8L1193 572.2L1193.5 571.9L1194 571.4L1194.5 571.9L1195 572L1195.5 571.9L1196 572.3L1196.4 571.7L1196.9 571.6L1197.4 571.6L1197.9 571.9L1198.4 572L1198.9 571.7L1199.4 572.1L1199.8 571.7L1200.3 571.8L1200.8 572.5L1201.3 572.1L1201.8 572.3L1202.3 572.4L1202.8 572.1L1203.3 571.8L1203.8 571.8L1204.2 572.1L1204.7 571.4L1205.2 571.6L1205.7 571.9L1206.2 572.5L1206.7 571.7L1207.2 571.6L1207.6 571.8L1208.1 571.7L1208.6 571.9L1209.1 571.7L1209.6 572.2L1210.1 572L1210.6 572.2L1211.1 572.1L1211.5 572.4L1212 572.1L1212.5 572.3L1213 572.4L1213.5 572.2L1214 572L1214.5 572.5L1215 572.2L1215.5 572L1215.9 572L1216.4 572.2L1216.9 572.1L1217.4 572L1217.9 571.7L1218.4 571.6L1218.9 571.8L1219.3 571.8L1219.8 572.5L1220.3 571.3L1220.8 572.4L1221.3 572.8L1221.8 571.7L1222.3 572.6L1222.8 571.6L1223.2 572.1L1223.7 572.4L1224.2 571.9L1224.7 572L1225.2 572.2L1225.7 571.8L1226.2 572.3L1226.7 572.3L1227.1 571.9L1227.6 571.6L1228.1 572L1228.6 571.6L1229.1 571.4L1229.6 571.9L1230.1 571.8L1230.6 571.6L1231 571.8L1231.5 571.9L1232 572.3L1232.5 572L1233 571.8L1233.5 571.9L1234 571.8L1234.5 572.5L1235 572.1L1235.4 572.5L1235.9 572.4L1236.4 572L1236.9 572.3L1237.4 572.3L1237.9 571.9L1238.4 572.5L1238.8 571.9L1239.3 571.8L1239.8 571.7L1240.3 571.5L1240.8 572.1L1241.3 572L1241.8 571.9L1242.3 571.9L1242.8 572.5L1243.2 572L1243.7 571.9L1244.2 572.1L1244.7 571.9L1245.2 572.1L1245.7 572.1L1246.2 571.8L1246.6 572.4L1247.1 572.6L1247.6 572.6L1248.1 572.1L1248.6 572L1249.1 572.2L1249.6 571.7L1250.1 571.6L1250.5 571.8L1251 571.9L1251.5 571.8L1252 571.9L1252.5 571.7L1253 572.2L1253.5 571.7L1254 571.7L1254.5 571.3L1254.9 571.7L1255.4 571.5L1255.9 571.8L1256.4 571.7L1256.9 572.3L1257.4 572.7L1257.9 572L1258.3 572.4L1258.8 572.5L1259.3 572.1L1259.8 572L1260.3 572.3L1260.8 572L1261.3 572L1261.8 571.9L1262.2 571.9L1262.7 572.3L1263.2 572.1L1263.7 571.5L1264.2 572L1264.7 572L1265.2 571.7L1265.7 571.8L1266.1 571.6L1266.6 572.1L1267.1 571.8L1267.6 572.1L1268.1 572L1268.6 572.5L1269.1 572.2L1269.6 572L1270 572.4L1270.5 572L1271 572.3L1271.5 571.7L1272 571.9L1272.5 572.1L1273 572.3L1273.5 572.7L1274 572.2L1274.4 572L1274.9 571.9L1275.4 571.7L1275.9 572L1276.4 571.8L1276.9 571.9L1277.4 571.5L1277.8 572.2L1278.3 572.2L1278.8 571.5L1279.3 572L1279.8 572L1280.3 571.9L1280.8 571.8L1281.3 571.6L1281.8 572L1282.2 572.1L1282.7 572.2L1283.2 572.4L1283.7 572.3L1284.2 572.2L1284.7 572.2L1285.2 571.8L1285.6 571.7L1286.1 571.6L1286.6 571.8L1287.1 571.8L1287.6 572L1288.1 572.1L1288.6 572L1289.1 572L1289.5 571.7L1290 571.9L1290.5 572.2L1291 571.7L1291.5 572.1L1292 571.8L1292.5 572.3L1293 572.1L1293.5 572.2L1293.9 572.2L1294.4 572.3L1294.9 572.4L1295.4 572.1L1295.9 572.1L1296.4 572.3L1296.9 571.9L1297.3 572L1297.8 572.2L1298.3 571.9L1298.8 572.3L1299.3 572.5L1299.8 572L1300.3 572L1300.8 571.6L1301.2 572L1301.7 571.8L1302.2 572.1L1302.7 572.2L1303.2 572.2L1303.7 572.4L1304.2 572.5L1304.7 572.1L1305.1 572.2L1305.6 572.4L1306.1 571.9L1306.6 572L1307.1 571.8L1307.6 571.8L1308.1 572L1308.6 572.1L1309 571.9L1309.5 571.8L1310 571.7L1310.5 571.5L1311 572L1311.5 571.8L1312 571.6L1312.5 571.8L1313 571.7L1313.4 571.7L1313.9 572.1L1314.4 572.2L1314.9 571.8L1315.4 572.2L1315.9 572.2L1316.4 571.8L1316.8 572.3L1317.3 572L1317.8 572.3L1318.3 571.8L1318.8 571.8L1319.3 571.8L1319.8 572.3L1320.3 572.3L1320.8 572L1321.2 571.9L1321.7 571.5L1322.2 572L1322.7 571.9L1323.2 572L1323.7 571.8L1324.2 572.4L1324.6 572.2L1325.1 572L1325.6 572.1L1326.1 572.1L1326.6 572.1L1327.1 572.3L1327.6 571.9L1328.1 571.8L1328.5 572.3L1329 572.8L1329.5 572.6L1330 572.4L1330.5 572.1L1331 572.3L1331.5 572.2L1332 572L1332.5 571.6L1332.9 572" stroke="#0c0cff" stroke-width="1.02" fill="none" stroke-linejoin="round"/><rect x="1084.65" y="560.35" width="250.05" height="86.80" fill="none" stroke="#7f7f7f" stroke-width="1.7"/><path d="M1333.80 551.20l9.8 9.9-9.8 9.9-9.8-9.9z" fill="#ff0000"/></svg>
<span class="t r" style="left:1074.11px;top:642px;font-size:11.5px;color:#545454;transform:scaleX(1.2133);">0</span>
<span class="t r" style="left:1054.26px;top:618px;font-size:11.5px;color:#545454;transform:scaleX(1.1654);">2500</span>
<span class="t r" style="left:1054.06px;top:593px;font-size:11.5px;color:#545454;transform:scaleX(1.1746);">5000</span>
<span class="t r" style="left:1053.92px;top:569px;font-size:11.5px;color:#545454;transform:scaleX(1.1808);">7500</span>
<span class="t r" style="left:1082.11px;top:652px;font-size:11.5px;color:#545454;transform:scaleX(1.2133);">0</span>
<span class="t r" style="left:1124.21px;top:652px;font-size:11.5px;color:#545454;transform:scaleX(1.1716);">200</span>
<span class="t r" style="left:1173.30px;top:652px;font-size:11.5px;color:#545454;transform:scaleX(1.1514);">400</span>
<span class="t r" style="left:1221.71px;top:652px;font-size:11.5px;color:#545454;transform:scaleX(1.1716);">600</span>
<span class="t r" style="left:1270.53px;top:652px;font-size:11.5px;color:#545454;transform:scaleX(1.1675);">800</span>
<span class="t r" style="left:1315.28px;top:652px;font-size:11.5px;color:#545454;transform:scaleX(1.1933);">1000</span>
<div style="left:1238.30px;top:568.25px;width:14.50px;height:11.75px;border:1px solid #ccc"></div>
<div style="left:1240.10px;top:569.80px;width:11.10px;height:8.50px;background:#0000ff"></div>
<span class="t r" style="left:1255.84px;top:569px;font-size:11.5px;color:#8e8e8e;transform:scaleX(1.1545);">aida12 1.8.W</span>
<svg style="left:129px;top:669px" width="267" height="105" viewBox="129 669 267 105"><path d="M181.5 682.5V769.1M230.2 682.5V769.1M279 682.5V769.1M327.8 682.5V769.1M376.5 682.5V769.1M132.8 745.2H382.1M132.8 721.3H382.1M132.8 697.5H382.1" stroke="rgba(84,84,84,0.16)" stroke-width="0.9" fill="none"/><path d="M132.8 695.1L133.2 694.9L133.7 694.7L134.2 694.7L134.7 694.9L135.2 694.4L135.7 694.2L136.2 694.6L136.7 694.8L137.1 695.1L137.6 694.7L138.1 694.7L138.6 694.5L139.1 694.4L139.6 693.9L140.1 694.1L140.6 695.1L141 694.5L141.5 694.7L142 694.7L142.5 694.7L143 694.5L143.5 694.5L144 695.4L144.4 694.5L144.9 694.5L145.4 694.4L145.9 694.6L146.4 695L146.9 694.8L147.4 694.7L147.9 694.8L148.3 695.1L148.8 694.5L149.3 695L149.8 694.8L150.3 694.8L150.8 694.3L151.3 694.3L151.8 693.6L152.2 693.1L152.7 694.5L153.2 694.8L153.7 695.4L154.2 694.9L154.7 693.9L155.2 693.4L155.7 694.2L156.2 694.8L156.6 695L157.1 694.6L157.6 694.2L158.1 693.7L158.6 693.9L159.1 694.1L159.6 694.5L160.1 694.8L160.5 694.5L161 694.6L161.5 694.5L162 694.6L162.5 694.5L163 694.7L163.5 694.1L163.9 695L164.4 694.9L164.9 695L165.4 695.5L165.9 695L166.4 695.4L166.9 694.9L167.4 694.1L167.8 694.7L168.3 695L168.8 694.7L169.3 694.8L169.8 695.1L170.3 694.7L170.8 694.3L171.3 694.9L171.8 694.2L172.2 693.9L172.7 695.4L173.2 695.6L173.7 693.7L174.2 694.9L174.7 695.2L175.2 694.7L175.7 695.2L176.1 694.9L176.6 694.4L177.1 694.6L177.6 694.4L178.1 694.1L178.6 694.9L179.1 695.1L179.6 694.7L180 694.5L180.5 691.4L181 690.4L181.5 690L182 690.1L182.5 692.4L183 694.1L183.4 696.6L183.9 697.4L184.4 698.6L184.9 698.5L185.4 696.9L185.9 695.4L186.4 693.6L186.9 691.8L187.3 691.7L187.8 692.2L188.3 692.6L188.8 693L189.3 694.7L189.8 695.9L190.3 696.5L190.8 696.5L191.2 696.3L191.7 695.2L192.2 693.5L192.7 692.9L193.2 693L193.7 693L194.2 692.9L194.7 693.1L195.2 694.3L195.6 694.5L196.1 695.5L196.6 695.8L197.1 695.4L197.6 695.7L198.1 695.4L198.6 694.3L199.1 694.4L199.5 693.3L200 693.3L200.5 693.5L201 694.5L201.5 695.4L202 695.2L202.5 695.6L202.9 695.6L203.4 695L203.9 695.5L204.4 694.2L204.9 694.5L205.4 694.1L205.9 693.9L206.4 694L206.8 694.3L207.3 694.6L207.8 694.6L208.3 695L208.8 694.8L209.3 695.1L209.8 694.5L210.3 695L210.8 694.2L211.2 694.7L211.7 694L212.2 694L212.7 694.2L213.2 694.2L213.7 694.5L214.2 695L214.6 694.8L215.1 695.3L215.6 695.1L216.1 694.6L216.6 695.1L217.1 694.6L217.6 694.4L218.1 694.6L218.6 694.4L219 694.3L219.5 694.2L220 694.4L220.5 694.9L221 695L221.5 695L222 695L222.4 694.2L222.9 694.5L223.4 694.3L223.9 693.8L224.4 694.2L224.9 694.4L225.4 694.6L225.9 694.8L226.3 694.4L226.8 694.1L227.3 694.6L227.8 694.3L228.3 694L228.8 694.2L229.3 694.4L229.8 694.1L230.2 694.1L230.7 695L231.2 694.8L231.7 694.7L232.2 694.6L232.7 694.9L233.2 694.8L233.7 694.7L234.1 695L234.6 694.7L235.1 695.3L235.6 694.4L236.1 694.4L236.6 695.3L237.1 695L237.6 695.2L238.1 694.9L238.5 695.5L239 694.6L239.5 695.1L240 695.2L240.5 694.1L241 695.2L241.5 694.2L241.9 694.5L242.4 694.1L242.9 694.7L243.4 694.6L243.9 694.5L244.4 695L244.9 694.1L245.4 694.4L245.8 694.7L246.3 694.4L246.8 694L247.3 694.5L247.8 694.5L248.3 695.5L248.8 695.1L249.3 694.5L249.8 694.7L250.2 694.8L250.7 694.9L251.2 694.9L251.7 695.5L252.2 694.6L252.7 695L253.2 694.7L253.6 694.3L254.1 694.4L254.6 694.6L255.1 694.5L255.6 694.5L256.1 695L256.6 694.5L257.1 694.4L257.6 694.4L258 695.2L258.5 694.3L259 695.5L259.5 693.2L260 695.7L260.5 695.2L261 694.3L261.4 693.8L261.9 694.2L262.4 694.6L262.9 694.5L263.4 694.2L263.9 694.4L264.4 694.7L264.9 694.4L265.4 693.5L265.8 694.2L266.3 694.4L266.8 694.4L267.3 695.1L267.8 694.9L268.3 694.8L268.8 694.9L269.2 694.8L269.7 694.9L270.2 694.6L270.7 694.7L271.2 695L271.7 695L272.2 694.9L272.7 695.1L273.1 694.7L273.6 694.6L274.1 694.6L274.6 695.1L275.1 694.5L275.6 695.3L276.1 695.1L276.6 694.4L277 695.1L277.5 694.6L278 694.5L278.5 694.5L279 694.3L279.5 693.9L280 694.6L280.5 694.5L280.9 694.7L281.4 694.8L281.9 694.3L282.4 695.1L282.9 694.3L283.4 694.4L283.9 694.2L284.4 694.7L284.9 694.5L285.3 694.3L285.8 695L286.3 695.3L286.8 694.4L287.3 694.5L287.8 694.4L288.3 694.8L288.8 694.6L289.2 695.2L289.7 694.6L290.2 695.2L290.7 694.8L291.2 695.1L291.7 695.1L292.2 694.2L292.6 694.5L293.1 694.2L293.6 693.5L294.1 694.4L294.6 694.6L295.1 694.4L295.6 694.1L296.1 694.1L296.5 694.2L297 694.5L297.5 694.1L298 694L298.5 694.5L299 694.3L299.5 694.4L300 694.3L300.4 694.6L300.9 695L301.4 694.5L301.9 694.4L302.4 694.5L302.9 694.4L303.4 694.7L303.9 694.8L304.4 695.6L304.8 695L305.3 694.7L305.8 695.2L306.3 695.2L306.8 694.8L307.3 695.4L307.8 694.1L308.2 694.6L308.7 695.6L309.2 695.3L309.7 694.2L310.2 694.6L310.7 694.7L311.2 695L311.7 694.6L312.1 694.5L312.6 694.2L313.1 694.9L313.6 694.6L314.1 694.5L314.6 694.7L315.1 694.6L315.6 694.2L316 694.5L316.5 694.1L317 694.3L317.5 694.6L318 694.8L318.5 695L319 694.7L319.5 694.5L319.9 695L320.4 693.8L320.9 694.8L321.4 693.8L321.9 695L322.4 694.2L322.9 694.8L323.4 694.9L323.9 694.7L324.3 694.8L324.8 694.5L325.3 694.1L325.8 694.4L326.3 694.8L326.8 694.4L327.3 694.3L327.8 694.4L328.2 694.2L328.7 694.5L329.2 694.4L329.7 693.9L330.2 694.5L330.7 694L331.2 694.7L331.6 694.4L332.1 695.1L332.6 695L333.1 694.6L333.6 694.2L334.1 694.3L334.6 694.6L335.1 694.4L335.5 694.5L336 695.3L336.5 694.6L337 694.7L337.5 695.2L338 695L338.5 694.5L339 695.1L339.4 694.9L339.9 694.8L340.4 694.7L340.9 695.7L341.4 694.6L341.9 694.9L342.4 694.7L342.9 694.7L343.4 694.6L343.8 695.1L344.3 694.7L344.8 694.9L345.3 694.4L345.8 694.6L346.3 695.2L346.8 694.7L347.2 694.3L347.7 693.8L348.2 694.6L348.7 694.8L349.2 694.6L349.7 694.9L350.2 695.3L350.7 694.4L351.1 694.4L351.6 693.8L352.1 693.8L352.6 693.9L353.1 693.8L353.6 694.5L354.1 694.7L354.6 694.7L355 694.3L355.5 694.8L356 694.7L356.5 694.5L357 694.6L357.5 694.1L358 695.2L358.5 695.5L358.9 693.9L359.4 693.6L359.9 694.3L360.4 695.2L360.9 695.6L361.4 694.7L361.9 694.1L362.4 694.1L362.9 694L363.3 694.5L363.8 694.5L364.3 694.7L364.8 694.1L365.3 694.8L365.8 694.3L366.3 694.4L366.8 694.3L367.2 694.3L367.7 694.6L368.2 694.1L368.7 694.2L369.2 694.6L369.7 694.6L370.2 694.1L370.6 694.4L371.1 694.3L371.6 694.9L372.1 694.8L372.6 694.1L373.1 695.1L373.6 695.2L374.1 695.3L374.5 694.9L375 694.3L375.5 695L376 694.7L376.5 694.8L377 694.7L377.5 694.8L378 695.1L378.4 694.4L378.9 695L379.4 695.4L379.9 694.9L380.4 694.8L380.9 694.4" stroke="#0c0cff" stroke-width="1.02" fill="none" stroke-linejoin="round"/><rect x="132.60" y="682.35" width="250.05" height="86.80" fill="none" stroke="#7f7f7f" stroke-width="1.7"/><path d="M381.75 673.20l9.8 9.9-9.8 9.9-9.8-9.9z" fill="#ff0000"/></svg>
<span class="t r" style="left:121.51px;top:764px;font-size:11.5px;color:#545454;transform:scaleX(1.2133);">0</span>
<span class="t r" style="left:101.66px;top:740px;font-size:11.5px;color:#545454;transform:scaleX(1.1654);">2500</span>
<span class="t r" style="left:101.46px;top:716px;font-size:11.5px;color:#545454;transform:scaleX(1.1746);">5000</span>
<span class="t r" style="left:101.32px;top:693px;font-size:11.5px;color:#545454;transform:scaleX(1.1808);">7500</span>
<span class="t r" style="left:129.46px;top:774px;font-size:11.5px;color:#545454;transform:scaleX(1.2133);">0</span>
<span class="t r" style="left:171.56px;top:774px;font-size:11.5px;color:#545454;transform:scaleX(1.1716);">200</span>
<span class="t r" style="left:220.65px;top:774px;font-size:11.5px;color:#545454;transform:scaleX(1.1514);">400</span>
<span class="t r" style="left:269.06px;top:774px;font-size:11.5px;color:#545454;transform:scaleX(1.1716);">600</span>
<span class="t r" style="left:317.88px;top:774px;font-size:11.5px;color:#545454;transform:scaleX(1.1675);">800</span>
<span class="t r" style="left:362.63px;top:774px;font-size:11.5px;color:#545454;transform:scaleX(1.1933);">1000</span>
<div style="left:286.25px;top:690.25px;width:14.50px;height:11.75px;border:1px solid #ccc"></div>
<div style="left:288.05px;top:691.80px;width:11.10px;height:8.50px;background:#0000ff"></div>
<span class="t r" style="left:303.79px;top:691px;font-size:11.5px;color:#8e8e8e;transform:scaleX(1.1545);">aida10 1.8.W</span>
<svg style="left:605px;top:669px" width="267" height="105" viewBox="605 669 267 105"><path d="M657.5 682.5V769.1M706.2 682.5V769.1M755 682.5V769.1M803.7 682.5V769.1M852.5 682.5V769.1M608.7 744.9H858.1M608.7 720.8H858.1M608.7 696.8H858.1" stroke="rgba(84,84,84,0.16)" stroke-width="0.9" fill="none"/><path d="M608.7 692L609.2 692.1L609.7 691.9L610.2 692L610.7 692.2L611.1 691.8L611.6 692L612.1 692.2L612.6 692L613.1 691.9L613.6 692L614.1 691.7L614.6 692L615 692.1L615.5 691.9L616 692.3L616.5 691.7L617 692.1L617.5 692L618 692.1L618.5 691.8L618.9 692.3L619.4 692L619.9 692L620.4 692L620.9 691.9L621.4 692L621.9 691.9L622.4 692L622.8 692.2L623.3 692.1L623.8 691.9L624.3 692L624.8 692L625.3 691.9L625.8 692.1L626.2 692.1L626.7 691.8L627.2 692L627.7 691.8L628.2 692L628.7 691.9L629.2 691.9L629.7 692.1L630.2 692L630.6 692.2L631.1 692L631.6 692.1L632.1 691.9L632.6 692.3L633.1 691.9L633.6 691.9L634.1 691.8L634.5 692.2L635 692.2L635.5 691.9L636 691.7L636.5 691.9L637 692L637.5 692.1L638 692.1L638.4 692.1L638.9 692L639.4 691.9L639.9 691.6L640.4 692.2L640.9 691.9L641.4 692L641.9 692.2L642.3 691.7L642.8 691.9L643.3 692.1L643.8 691.8L644.3 691.8L644.8 692.2L645.3 691.9L645.8 691.9L646.2 692.2L646.7 692L647.2 692.2L647.7 691.7L648.2 692.1L648.7 692.3L649.2 691.8L649.7 691.6L650.1 692.1L650.6 692.2L651.1 692.3L651.6 691.8L652.1 691.8L652.6 691.6L653.1 692.2L653.6 692.3L654 692L654.5 692.1L655 691.9L655.5 692L656 691.9L656.5 692L657 691.8L657.5 691.9L657.9 714.4L658.4 726.4L658.9 732.6L659.4 736.7L659.9 738.5L660.4 739.4L660.9 740.2L661.4 740.2L661.8 740.7L662.3 741.1L662.8 740.7L663.3 740.9L663.8 740.9L664.3 741.1L664.8 741.2L665.2 741L665.7 741.2L666.2 740.8L666.7 741.4L667.2 741.1L667.7 741.3L668.2 741.2L668.7 741.3L669.2 741.5L669.6 741.2L670.1 741.1L670.6 741.3L671.1 741.3L671.6 741.4L672.1 741.1L672.6 741.3L673.1 741.5L673.5 741.2L674 741.3L674.5 741.3L675 741.3L675.5 741.3L676 741.2L676.5 740.9L677 741.2L677.4 741.4L677.9 740.9L678.4 741.2L678.9 741L679.4 741.1L679.9 741.3L680.4 741.1L680.9 741L681.3 740.9L681.8 741.2L682.3 740.8L682.8 740.9L683.3 741L683.8 740.7L684.3 740.8L684.8 740.9L685.2 740.9L685.7 740.8L686.2 740.8L686.7 740.8L687.2 740.6L687.7 740.7L688.2 740.9L688.7 740.7L689.1 740.8L689.6 740.8L690.1 740.9L690.6 740.4L691.1 740.7L691.6 740.4L692.1 740.8L692.6 740.4L693 740.4L693.5 740.4L694 740.6L694.5 740.6L695 740.8L695.5 740.4L696 740.3L696.5 740.4L696.9 740.3L697.4 740.3L697.9 740.4L698.4 740.3L698.9 740.3L699.4 740L699.9 740.4L700.4 740.3L700.8 740L701.3 740.2L701.8 740.3L702.3 740.1L702.8 740L703.3 740.1L703.8 740L704.2 740.1L704.7 739.9L705.2 740.2L705.7 739.6L706.2 739.7L706.7 740.3L707.2 740.3L707.7 740L708.2 740.1L708.6 739.9L709.1 739.7L709.6 740L710.1 739.8L710.6 739.9L711.1 739.8L711.6 739.6L712.1 739.8L712.5 739.6L713 740L713.5 739.8L714 739.7L714.5 739.8L715 739.8L715.5 739.6L716 739.5L716.4 739.4L716.9 739.5L717.4 739.4L717.9 739.5L718.4 739.3L718.9 739.5L719.4 739.6L719.9 739.2L720.3 739.3L720.8 739.4L721.3 739.5L721.8 739.3L722.3 739.4L722.8 739.2L723.3 739.5L723.8 739.2L724.2 739.2L724.7 739.2L725.2 739.1L725.7 739.2L726.2 739.1L726.7 739.3L727.2 739.2L727.7 739L728.1 739.1L728.6 739.3L729.1 738.8L729.6 739L730.1 739.3L730.6 738.9L731.1 738.8L731.6 738.9L732 739.3L732.5 738.9L733 738.9L733.5 738.8L734 739L734.5 738.9L735 739L735.5 738.8L735.9 738.8L736.4 738.8L736.9 738.6L737.4 739L737.9 738.7L738.4 738.7L738.9 738.8L739.4 738.7L739.8 738.7L740.3 738.7L740.8 738.6L741.3 738.6L741.8 738.7L742.3 738.4L742.8 738.5L743.2 738.2L743.7 738.4L744.2 738.4L744.7 738.3L745.2 738.6L745.7 738.2L746.2 738.2L746.7 738.3L747.2 738.3L747.6 738.4L748.1 738.4L748.6 738.1L749.1 738.5L749.6 738.4L750.1 738.2L750.6 738.2L751.1 738.1L751.5 738L752 737.8L752.5 738L753 738L753.5 738.2L754 738L754.5 737.9L755 737.9L755.4 737.9L755.9 738.1L756.4 737.9L756.9 737.9L757.4 737.9L757.9 737.9L758.4 737.9L758.9 737.9L759.3 738L759.8 737.9L760.3 738L760.8 737.9L761.3 737.9L761.8 737.8L762.3 737.6L762.8 737.7L763.2 737.9L763.7 737.3L764.2 737.7L764.7 737.5L765.2 737.7L765.7 737.7L766.2 737.5L766.7 737.8L767.1 737.4L767.6 737.5L768.1 737.6L768.6 737.5L769.1 737.4L769.6 737.6L770.1 737.2L770.6 737.4L771 737.1L771.5 737.6L772 737.5L772.5 737.5L773 737.4L773.5 737.2L774 737.1L774.5 737.1L774.9 737L775.4 737.2L775.9 737.1L776.4 737.3L776.9 737L777.4 737.1L777.9 736.9L778.4 737.1L778.8 736.9L779.3 737L779.8 737L780.3 736.9L780.8 736.9L781.3 737.1L781.8 736.7L782.2 736.5L782.7 737L783.2 737.2L783.7 736.7L784.2 737L784.7 736.9L785.2 736.7L785.7 736.5L786.2 737.1L786.6 736.7L787.1 736.5L787.6 736.7L788.1 736.7L788.6 736.5L789.1 736.9L789.6 736.6L790.1 736.6L790.5 736.6L791 736.8L791.5 736.9L792 736.5L792.5 736.4L793 736.6L793.5 736.7L794 736.3L794.4 736.2L794.9 736.5L795.4 736.5L795.9 736.3L796.4 736.3L796.9 736.2L797.4 736.3L797.9 736.3L798.3 730L798.8 724.9L799.3 720L799.8 716.1L800.3 712.7L800.8 709.8L801.3 707.2L801.8 705.2L802.2 703.4L802.7 701.6L803.2 700.5L803.7 699.5L804.2 698.6L804.7 697.4L805.2 696.8L805.7 696.1L806.1 695.7L806.6 694.9L807.1 694.4L807.6 694.3L808.1 693.8L808.6 693.1L809.1 693.3L809.6 693.1L810 692.9L810.5 692.6L811 692.6L811.5 692.4L812 692.2L812.5 692.3L813 691.9L813.5 691.5L813.9 691.7L814.4 691.5L814.9 691.3L815.4 691.5L815.9 691.3L816.4 691.4L816.9 691.3L817.4 691.2L817.8 691.4L818.3 691.5L818.8 691.4L819.3 691.4L819.8 691.8L820.3 691.8L820.8 691.3L821.2 691.9L821.7 691.9L822.2 692.1L822.7 692.1L823.2 692L823.7 691.9L824.2 692.2L824.7 692L825.2 691.9L825.6 692.2L826.1 692.2L826.6 692.2L827.1 692.2L827.6 692.3L828.1 692.4L828.6 692.2L829.1 692.6L829.5 692.6L830 692.3L830.5 692.6L831 692.4L831.5 692.4L832 692.4L832.5 692.6L833 692.2L833.4 692.8L833.9 692.5L834.4 692.5L834.9 692.5L835.4 692.4L835.9 692.3L836.4 692.6L836.9 692.4L837.3 692.6L837.8 692.8L838.3 692.5L838.8 692.6L839.3 692.5L839.8 692.4L840.3 692.5L840.8 692.8L841.2 692.6L841.7 692.6L842.2 692.4L842.7 692.5L843.2 692.7L843.7 692.5L844.2 692.3L844.7 692.4L845.1 692.6L845.6 692.6L846.1 692.2L846.6 692.5L847.1 692.4L847.6 692.1L848.1 692.3L848.6 692.5L849 692.3L849.5 692.5L850 692.5L850.5 692.5L851 692.4L851.5 692.6L852 692.3L852.5 692.2L852.9 692.6L853.4 692.7L853.9 692.4L854.4 692.7L854.9 692.6L855.4 692.4L855.9 692.6L856.4 692.7L856.8 692.4" stroke="#0c0cff" stroke-width="1.02" fill="none" stroke-linejoin="round"/><rect x="608.55" y="682.35" width="250.05" height="86.80" fill="none" stroke="#7f7f7f" stroke-width="1.7"/><path d="M857.70 673.20l9.8 9.9-9.8 9.9-9.8-9.9z" fill="#ff0000"/></svg>
<span class="t r" style="left:597.71px;top:764px;font-size:11.5px;color:#545454;transform:scaleX(1.2133);">0</span>
<span class="t r" style="left:577.86px;top:740px;font-size:11.5px;color:#545454;transform:scaleX(1.1654);">2500</span>
<span class="t r" style="left:577.66px;top:716px;font-size:11.5px;color:#545454;transform:scaleX(1.1746);">5000</span>
<span class="t r" style="left:577.52px;top:692px;font-size:11.5px;color:#545454;transform:scaleX(1.1808);">7500</span>
<span class="t r" style="left:605.61px;top:774px;font-size:11.5px;color:#545454;transform:scaleX(1.2133);">0</span>
<span class="t r" style="left:647.71px;top:774px;font-size:11.5px;color:#545454;transform:scaleX(1.1716);">200</span>
<span class="t r" style="left:696.80px;top:774px;font-size:11.5px;color:#545454;transform:scaleX(1.1514);">400</span>
<span class="t r" style="left:745.21px;top:774px;font-size:11.5px;color:#545454;transform:scaleX(1.1716);">600</span>
<span class="t r" style="left:794.03px;top:774px;font-size:11.5px;color:#545454;transform:scaleX(1.1675);">800</span>
<span class="t r" style="left:838.78px;top:774px;font-size:11.5px;color:#545454;transform:scaleX(1.1933);">1000</span>
<div style="left:762.20px;top:690.25px;width:14.50px;height:11.75px;border:1px solid #ccc"></div>
<div style="left:764.00px;top:691.80px;width:11.10px;height:8.50px;background:#0000ff"></div>
<span class="t r" style="left:779.74px;top:691px;font-size:11.5px;color:#8e8e8e;transform:scaleX(1.1545);">aida14 1.8.W</span>
<svg style="left:1081px;top:669px" width="267" height="105" viewBox="1081 669 267 105"><path d="M1133.5 682.5V769.1M1182.3 682.5V769.1M1231 682.5V769.1M1279.8 682.5V769.1M1328.5 682.5V769.1M1084.8 744.9H1334.2M1084.8 720.8H1334.2M1084.8 696.8H1334.2" stroke="rgba(84,84,84,0.16)" stroke-width="0.9" fill="none"/><path d="M1084.8 694L1085.3 693.9L1085.8 693.6L1086.3 693.8L1086.8 693.4L1087.2 693.6L1087.7 693.5L1088.2 693.3L1088.7 693.4L1089.2 693.3L1089.7 694L1090.2 693.4L1090.6 693.5L1091.1 693.8L1091.6 693.7L1092.1 693.7L1092.6 693.3L1093.1 693.3L1093.6 693.4L1094.1 693.5L1094.5 693.7L1095 693.8L1095.5 693.8L1096 694L1096.5 693.6L1097 693.7L1097.5 693.9L1098 694L1098.5 693.8L1098.9 693.8L1099.4 693.9L1099.9 693.7L1100.4 693.8L1100.9 694.1L1101.4 694L1101.9 693.9L1102.3 694.1L1102.8 694.1L1103.3 694.1L1103.8 694.2L1104.3 693.7L1104.8 694L1105.3 693.6L1105.8 693.8L1106.2 693.4L1106.7 693.8L1107.2 693.8L1107.7 693.5L1108.2 693.8L1108.7 693.7L1109.2 694L1109.7 693.8L1110.1 693.7L1110.6 693.6L1111.1 693.6L1111.6 693.7L1112.1 693.7L1112.6 693.4L1113.1 693.5L1113.6 693.4L1114 693.6L1114.5 693.8L1115 693.9L1115.5 694L1116 693.8L1116.5 693.7L1117 694.1L1117.5 693.8L1118 693.6L1118.4 693.7L1118.9 693.6L1119.4 693.8L1119.9 693.8L1120.4 693.5L1120.9 693.7L1121.4 693.9L1121.8 693.8L1122.3 693.9L1122.8 693.6L1123.3 693.9L1123.8 693.7L1124.3 693.3L1124.8 693.7L1125.3 693.3L1125.8 693.5L1126.2 693.6L1126.7 693.7L1127.2 693.8L1127.7 693.4L1128.2 693.8L1128.7 693.7L1129.2 693.7L1129.6 693.8L1130.1 694.3L1130.6 693.7L1131.1 693.6L1131.6 694.2L1132.1 693.9L1132.6 693.9L1133.1 691.5L1133.5 691.4L1134 693.6L1134.5 695.5L1135 696.6L1135.5 695L1136 693.3L1136.5 692.5L1137 693.2L1137.5 694.4L1137.9 694.8L1138.4 694.5L1138.9 693.7L1139.4 693.1L1139.9 693.2L1140.4 693.8L1140.9 694.2L1141.3 694.2L1141.8 693.8L1142.3 693.5L1142.8 693.3L1143.3 693.3L1143.8 693.4L1144.3 693.8L1144.8 693.8L1145.2 693.3L1145.7 693.2L1146.2 693.6L1146.7 693.9L1147.2 693.8L1147.7 693.9L1148.2 693.7L1148.7 693.8L1149.1 693.3L1149.6 693.5L1150.1 693.5L1150.6 693.3L1151.1 693.7L1151.6 693.8L1152.1 693.8L1152.6 693.9L1153 693.9L1153.5 694.1L1154 693.8L1154.5 693.8L1155 694L1155.5 693.9L1156 693.9L1156.5 693.5L1157 694L1157.4 694L1157.9 693.9L1158.4 693.7L1158.9 694.1L1159.4 694.1L1159.9 693.9L1160.4 694L1160.8 693.9L1161.3 693.9L1161.8 693.8L1162.3 693.7L1162.8 693.4L1163.3 693.5L1163.8 693.4L1164.3 693.9L1164.8 693.9L1165.2 693.9L1165.7 694.2L1166.2 693.7L1166.7 694.1L1167.2 693.7L1167.7 693.5L1168.2 693.7L1168.6 693.6L1169.1 693.7L1169.6 693.7L1170.1 693.9L1170.6 693.9L1171.1 693.8L1171.6 693.8L1172.1 694.1L1172.5 694.2L1173 694L1173.5 693.9L1174 693.4L1174.5 693.8L1175 693.5L1175.5 693.7L1176 693.8L1176.5 693.5L1176.9 693.4L1177.4 693.6L1177.9 693.8L1178.4 693.8L1178.9 693.5L1179.4 693.7L1179.9 693.4L1180.3 693.4L1180.8 693.6L1181.3 693.4L1181.8 693.1L1182.3 693.3L1182.8 693.8L1183.3 693.4L1183.8 694L1184.2 693.9L1184.7 693.7L1185.2 693.8L1185.7 694L1186.2 694.1L1186.7 693.6L1187.2 693.8L1187.7 693.9L1188.1 694L1188.6 694.3L1189.1 694.3L1189.6 694.1L1190.1 693.9L1190.6 694.1L1191.1 694L1191.6 694.1L1192 694L1192.5 693.9L1193 693.9L1193.5 693.7L1194 693.9L1194.5 693.9L1195 693.5L1195.5 693.5L1196 693.6L1196.4 693.4L1196.9 693.8L1197.4 693.8L1197.9 693.7L1198.4 694L1198.9 693.7L1199.4 693.7L1199.8 693.5L1200.3 693.3L1200.8 693.1L1201.3 693.4L1201.8 693.6L1202.3 693.5L1202.8 693.6L1203.3 693.8L1203.8 694.1L1204.2 693.7L1204.7 693.7L1205.2 693.6L1205.7 693.6L1206.2 693.4L1206.7 693.7L1207.2 693.5L1207.6 693.9L1208.1 693.6L1208.6 693.6L1209.1 694L1209.6 694L1210.1 693.7L1210.6 693.9L1211.1 693.8L1211.5 694L1212 693.5L1212.5 693.3L1213 693.6L1213.5 693.7L1214 693.8L1214.5 693.6L1215 693.4L1215.5 693.4L1215.9 694.2L1216.4 693.8L1216.9 693.7L1217.4 693.8L1217.9 693.7L1218.4 693.5L1218.9 693.6L1219.3 693.6L1219.8 693.9L1220.3 694.1L1220.8 694L1221.3 694L1221.8 693.8L1222.3 693.9L1222.8 694.1L1223.2 693.9L1223.7 693.8L1224.2 694.3L1224.7 693.8L1225.2 693.7L1225.7 693.5L1226.2 693.9L1226.7 693.9L1227.1 693.8L1227.6 694L1228.1 693.5L1228.6 694.2L1229.1 694.1L1229.6 693.4L1230.1 693.7L1230.6 693.7L1231 693.7L1231.5 693.5L1232 693.6L1232.5 693.5L1233 693.4L1233.5 693.8L1234 693.3L1234.5 693.5L1235 693.5L1235.4 693.9L1235.9 693.5L1236.4 693.3L1236.9 693.3L1237.4 693.5L1237.9 693.5L1238.4 693.6L1238.8 693.3L1239.3 693.7L1239.8 693.9L1240.3 694.2L1240.8 694.2L1241.3 693.7L1241.8 694.1L1242.3 693.8L1242.8 694L1243.2 694L1243.7 693.8L1244.2 693.3L1244.7 693.9L1245.2 693.9L1245.7 693.9L1246.2 694.1L1246.6 694L1247.1 694L1247.6 694.1L1248.1 693.9L1248.6 694L1249.1 693.7L1249.6 693.7L1250.1 693.8L1250.5 693.9L1251 693.6L1251.5 693.7L1252 693.6L1252.5 693.4L1253 693.7L1253.5 694.2L1254 693.7L1254.5 693.9L1254.9 693.8L1255.4 693.8L1255.9 693.6L1256.4 693.7L1256.9 693.5L1257.4 694L1257.9 693.7L1258.3 693.7L1258.8 694L1259.3 693.7L1259.8 694.1L1260.3 694.3L1260.8 693.7L1261.3 693.9L1261.8 693.6L1262.2 693.7L1262.7 693.6L1263.2 693.3L1263.7 693.9L1264.2 693.7L1264.7 693.9L1265.2 693.7L1265.7 693.8L1266.1 693.8L1266.6 693.5L1267.1 694.1L1267.6 693.9L1268.1 693.8L1268.6 693.6L1269.1 693.4L1269.6 693.6L1270 694.1L1270.5 693.9L1271 693.7L1271.5 693.5L1272 693.9L1272.5 693.4L1273 694L1273.5 693.7L1274 693.7L1274.4 694L1274.9 694L1275.4 693.7L1275.9 693.6L1276.4 693.5L1276.9 693.7L1277.4 694.1L1277.8 694.1L1278.3 694L1278.8 694.2L1279.3 694.1L1279.8 693.8L1280.3 693.9L1280.8 694.2L1281.3 694.2L1281.8 693.7L1282.2 693.8L1282.7 693.6L1283.2 693.9L1283.7 693.8L1284.2 693.9L1284.7 694.1L1285.2 694L1285.6 693.9L1286.1 693.8L1286.6 693.7L1287.1 693.2L1287.6 693.5L1288.1 693.3L1288.6 693.7L1289.1 693.4L1289.5 693.3L1290 693.4L1290.5 693.8L1291 693.7L1291.5 693.7L1292 693.9L1292.5 693.7L1293 693.6L1293.5 693.8L1293.9 693.7L1294.4 693.7L1294.9 693.7L1295.4 693.2L1295.9 694L1296.4 693.8L1296.9 694.1L1297.3 693.9L1297.8 694L1298.3 693.8L1298.8 694.1L1299.3 693.7L1299.8 694.1L1300.3 693.8L1300.8 693.8L1301.2 693.6L1301.7 693.7L1302.2 693.9L1302.7 693.9L1303.2 693.9L1303.7 693.7L1304.2 693.8L1304.7 693.9L1305.1 693.5L1305.6 693.5L1306.1 693.4L1306.6 693.6L1307.1 693.5L1307.6 693.4L1308.1 693.6L1308.6 693.8L1309 693.6L1309.5 693.9L1310 694.3L1310.5 693.5L1311 693.7L1311.5 693.7L1312 693.8L1312.5 694L1313 693.7L1313.4 693.6L1313.9 693.5L1314.4 693.2L1314.9 693.5L1315.4 694.2L1315.9 693.7L1316.4 694.1L1316.8 694L1317.3 693.8L1317.8 693.5L1318.3 694.1L1318.8 693.8L1319.3 693.6L1319.8 693.3L1320.3 693.6L1320.8 693.3L1321.2 693.3L1321.7 693.7L1322.2 693.7L1322.7 693.7L1323.2 693.7L1323.7 693.6L1324.2 693.5L1324.6 693.2L1325.1 693.4L1325.6 693.5L1326.1 693.8L1326.6 693.1L1327.1 693.8L1327.6 693.5L1328.1 694L1328.5 693.7L1329 693.9L1329.5 693.9L1330 693.9L1330.5 693.9L1331 694L1331.5 694L1332 693.7L1332.5 694L1332.9 694" stroke="#0c0cff" stroke-width="1.02" fill="none" stroke-linejoin="round"/><rect x="1084.65" y="682.35" width="250.05" height="86.80" fill="none" stroke="#7f7f7f" stroke-width="1.7"/><path d="M1333.80 673.20l9.8 9.9-9.8 9.9-9.8-9.9z" fill="#ff0000"/></svg>
<span class="t r" style="left:1074.11px;top:764px;font-size:11.5px;color:#545454;transform:scaleX(1.2133);">0</span>
<span class="t r" style="left:1054.26px;top:740px;font-size:11.5px;color:#545454;transform:scaleX(1.1654);">2500</span>
<span class="t r" style="left:1054.06px;top:716px;font-size:11.5px;color:#545454;transform:scaleX(1.1746);">5000</span>
<span class="t r" style="left:1053.92px;top:692px;font-size:11.5px;color:#545454;transform:scaleX(1.1808);">7500</span>
<span class="t r" style="left:1082.11px;top:774px;font-size:11.5px;color:#545454;transform:scaleX(1.2133);">0</span>
<span class="t r" style="left:1124.21px;top:774px;font-size:11.5px;color:#545454;transform:scaleX(1.1716);">200</span>
<span class="t r" style="left:1173.30px;top:774px;font-size:11.5px;color:#545454;transform:scaleX(1.1514);">400</span>
<span class="t r" style="left:1221.71px;top:774px;font-size:11.5px;color:#545454;transform:scaleX(1.1716);">600</span>
<span class="t r" style="left:1270.53px;top:774px;font-size:11.5px;color:#545454;transform:scaleX(1.1675);">800</span>
<span class="t r" style="left:1315.28px;top:774px;font-size:11.5px;color:#545454;transform:scaleX(1.1933);">1000</span>
<div style="left:1238.30px;top:690.25px;width:14.50px;height:11.75px;border:1px solid #ccc"></div>
<div style="left:1240.10px;top:691.80px;width:11.10px;height:8.50px;background:#0000ff"></div>
<span class="t r" style="left:1255.84px;top:691px;font-size:11.5px;color:#8e8e8e;transform:scaleX(1.1545);">aida13 1.8.W</span>
<svg style="left:129px;top:791px" width="267" height="105" viewBox="129 791 267 105"><path d="M181.5 804.3V890.9M230.2 804.3V890.9M279 804.3V890.9M327.8 804.3V890.9M376.5 804.3V890.9M132.8 867.8H382.1M132.8 844.8H382.1M132.8 821.8H382.1" stroke="rgba(84,84,84,0.16)" stroke-width="0.9" fill="none"/><path d="M132.8 818.6L133.2 818.3L133.7 819.2L134.2 818.7L134.7 819.3L135.2 818.7L135.7 819.3L136.2 819L136.7 819.3L137.1 818.4L137.6 818.8L138.1 818.1L138.6 819.1L139.1 819.1L139.6 818.8L140.1 818.9L140.6 819.6L141 820L141.5 820L142 820L142.5 819.9L143 819.5L143.5 819.7L144 819.1L144.4 819.5L144.9 819.1L145.4 819.7L145.9 819.7L146.4 819.7L146.9 819.5L147.4 819.8L147.9 819.9L148.3 819.9L148.8 819.8L149.3 820.1L149.8 819.5L150.3 819.2L150.8 819.8L151.3 819.2L151.8 819.1L152.2 819.2L152.7 819.4L153.2 819.5L153.7 819.4L154.2 819.5L154.7 819.7L155.2 819.8L155.7 818.7L156.2 820.3L156.6 818.1L157.1 820.2L157.6 818.2L158.1 818.4L158.6 819.9L159.1 818.7L159.6 819.6L160.1 819.4L160.5 819.9L161 819.7L161.5 820.1L162 820.2L162.5 820.1L163 819.6L163.5 819.6L163.9 819.1L164.4 818.8L164.9 819.1L165.4 819L165.9 819.4L166.4 819.1L166.9 818.4L167.4 819.1L167.8 819.6L168.3 819.8L168.8 819.4L169.3 819.6L169.8 818.8L170.3 817.8L170.8 818.3L171.3 818.6L171.8 818.5L172.2 819.1L172.7 818.7L173.2 819.3L173.7 819L174.2 819.7L174.7 819.5L175.2 819.9L175.7 819.8L176.1 819.7L176.6 818.9L177.1 819.9L177.6 819.2L178.1 819L178.6 819.3L179.1 820L179.6 819.8L180 813.2L180.5 821.5L181 825.6L181.5 818.4L182 816.3L182.5 821.7L183 823.3L183.4 817.8L183.9 817.7L184.4 821.2L184.9 820.5L185.4 817.8L185.9 818.7L186.4 821.4L186.9 819.5L187.3 818.2L187.8 819L188.3 820.6L188.8 819.5L189.3 818.9L189.8 818.3L190.3 818.7L190.8 818.1L191.2 818L191.7 818.3L192.2 818.2L192.7 818.4L193.2 819L193.7 819.2L194.2 819.5L194.7 819L195.2 818.9L195.6 819.6L196.1 819.1L196.6 818.7L197.1 819.1L197.6 819.2L198.1 819L198.6 819.5L199.1 819.3L199.5 819.6L200 820.2L200.5 820.7L201 820.6L201.5 820.5L202 820.4L202.5 819.5L202.9 820L203.4 819.4L203.9 819.6L204.4 819.5L204.9 819.4L205.4 819.7L205.9 820.1L206.4 819.8L206.8 820.2L207.3 820.4L207.8 820.3L208.3 819.8L208.8 819.4L209.3 819.4L209.8 819L210.3 819.1L210.8 818.6L211.2 819.1L211.7 818.6L212.2 818.8L212.7 819.1L213.2 819.4L213.7 818.8L214.2 819.3L214.6 819L215.1 819.3L215.6 819.4L216.1 818.8L216.6 818.9L217.1 818.8L217.6 818.9L218.1 819L218.6 818.9L219 819.7L219.5 820.1L220 820.3L220.5 819.4L221 820L221.5 819.9L222 819.6L222.4 819.4L222.9 818.6L223.4 819.2L223.9 819L224.4 818.9L224.9 819.8L225.4 819.1L225.9 819.1L226.3 819.6L226.8 819.5L227.3 819.6L227.8 819.5L228.3 819.7L228.8 818.9L229.3 819.7L229.8 819.8L230.2 818.9L230.7 818.6L231.2 818.7L231.7 819.3L232.2 818.6L232.7 820.5L233.2 819.3L233.7 820.6L234.1 820.2L234.6 819.6L235.1 819.9L235.6 819.2L236.1 819.2L236.6 819.7L237.1 819.7L237.6 819.6L238.1 819.9L238.5 819.4L239 820L239.5 820.5L240 820.5L240.5 820.4L241 820.4L241.5 819.4L241.9 819.9L242.4 819.3L242.9 819.7L243.4 819L243.9 819.2L244.4 818.8L244.9 819.4L245.4 819.3L245.8 819.7L246.3 819.1L246.8 819L247.3 819.7L247.8 819.3L248.3 818.9L248.8 818.5L249.3 818.5L249.8 818L250.2 817.9L250.7 818.5L251.2 818.3L251.7 819.2L252.2 819L252.7 819L253.2 819.6L253.6 819.4L254.1 819.1L254.6 819.2L255.1 819.9L255.6 819.3L256.1 819.7L256.6 819.3L257.1 819.9L257.6 819.6L258 820.3L258.5 820.3L259 821L259.5 820.4L260 820.1L260.5 820.2L261 820.6L261.4 820.5L261.9 819.9L262.4 819.9L262.9 819.4L263.4 819.6L263.9 819.4L264.4 819.6L264.9 819.5L265.4 819.4L265.8 819.4L266.3 819.5L266.8 819.3L267.3 818.8L267.8 818.8L268.3 819L268.8 819L269.2 818.1L269.7 818.4L270.2 818.4L270.7 818.5L271.2 819L271.7 818.8L272.2 819.3L272.7 819.1L273.1 819.5L273.6 819L274.1 819.2L274.6 818.6L275.1 819.4L275.6 819.3L276.1 819L276.6 819.7L277 818.7L277.5 819.6L278 819.7L278.5 820.1L279 820L279.5 820L280 820.1L280.5 820.1L280.9 820.6L281.4 819.3L281.9 819.9L282.4 819L282.9 819.2L283.4 819.1L283.9 819.3L284.4 819.6L284.9 820L285.3 820L285.8 819.6L286.3 819.8L286.8 820.2L287.3 819.4L287.8 819.1L288.3 818.9L288.8 818.4L289.2 819L289.7 818.6L290.2 819L290.7 818.6L291.2 819.7L291.7 819.5L292.2 819.5L292.6 819.8L293.1 819.9L293.6 819.6L294.1 819.5L294.6 819.8L295.1 820.2L295.6 819.1L296.1 819L296.5 819.1L297 819.4L297.5 819.4L298 820L298.5 819.8L299 820L299.5 820.4L300 819.8L300.4 820L300.9 819.6L301.4 819.3L301.9 819L302.4 819.1L302.9 819L303.4 818.7L303.9 819L304.4 819L304.8 819.4L305.3 819.6L305.8 819.5L306.3 818.9L306.8 819.2L307.3 819.1L307.8 819.4L308.2 818.5L308.7 818.9L309.2 819L309.7 818.5L310.2 818.5L310.7 819.3L311.2 819.9L311.7 819.6L312.1 819.5L312.6 820L313.1 820.2L313.6 819.8L314.1 819.9L314.6 819.5L315.1 820.1L315.6 819.3L316 819.3L316.5 819.8L317 819.9L317.5 819.8L318 820.6L318.5 820.4L319 820.4L319.5 820.9L319.9 820.2L320.4 820.6L320.9 819.7L321.4 819.4L321.9 819.3L322.4 818.9L322.9 819.1L323.4 818.7L323.9 819.2L324.3 818.9L324.8 819.4L325.3 819.2L325.8 819.1L326.3 819.5L326.8 818.4L327.3 818.6L327.8 819L328.2 818.1L328.7 817.8L329.2 817.9L329.7 818.7L330.2 818.3L330.7 818.5L331.2 819L331.6 819.7L332.1 819.2L332.6 820.1L333.1 819.5L333.6 819.6L334.1 819.4L334.6 819.4L335.1 819L335.5 819.8L336 819L336.5 819.9L337 820.1L337.5 820.3L338 821L338.5 820.5L339 820.2L339.4 820.7L339.9 820.1L340.4 819.7L340.9 819.6L341.4 819.3L341.9 819.5L342.4 820L342.9 819L343.4 819.5L343.8 819.5L344.3 819.5L344.8 820.1L345.3 819.4L345.8 820L346.3 819.3L346.8 819.2L347.2 818.7L347.7 818.9L348.2 818.8L348.7 818.5L349.2 819.1L349.7 818.6L350.2 819L350.7 819.7L351.1 819.4L351.6 818.9L352.1 820L352.6 820.1L353.1 819.3L353.6 819.5L354.1 819.2L354.6 819.2L355 819L355.5 819L356 819.3L356.5 819.5L357 819.1L357.5 819.6L358 819.7L358.5 819.9L358.9 820L359.4 819.3L359.9 819.1L360.4 819L360.9 819.5L361.4 819.1L361.9 819.1L362.4 818.9L362.9 819.3L363.3 819.6L363.8 819.5L364.3 819.8L364.8 819.8L365.3 819.7L365.8 819.9L366.3 819.1L366.8 819.4L367.2 819.1L367.7 818.6L368.2 818.7L368.7 820.1L369.2 818.7L369.7 819.4L370.2 819.6L370.6 819.8L371.1 819.9L371.6 820.2L372.1 819.9L372.6 820.3L373.1 819.8L373.6 819.9L374.1 819.6L374.5 819.4L375 819.5L375.5 820L376 819.8L376.5 820.2L377 820.2L377.5 819.8L378 820L378.4 819.9L378.9 819.6L379.4 819.6L379.9 819.1L380.4 819L380.9 818.5" stroke="#0c0cff" stroke-width="1.02" fill="none" stroke-linejoin="round"/><rect x="132.60" y="804.15" width="250.05" height="86.80" fill="none" stroke="#7f7f7f" stroke-width="1.7"/><path d="M381.75 795.00l9.8 9.9-9.8 9.9-9.8-9.9z" fill="#ff0000"/></svg>
<span class="t r" style="left:121.51px;top:886px;font-size:11.5px;color:#545454;transform:scaleX(1.2133);">0</span>
<span class="t r" style="left:101.66px;top:862px;font-size:11.5px;color:#545454;transform:scaleX(1.1654);">2500</span>
<span class="t r" style="left:101.46px;top:840px;font-size:11.5px;color:#545454;transform:scaleX(1.1746);">5000</span>
<span class="t r" style="left:101.32px;top:817px;font-size:11.5px;color:#545454;transform:scaleX(1.1808);">7500</span>
<span class="t r" style="left:129.46px;top:896px;font-size:11.5px;color:#545454;transform:scaleX(1.2133);">0</span>
<span class="t r" style="left:171.56px;top:896px;font-size:11.5px;color:#545454;transform:scaleX(1.1716);">200</span>
<span class="t r" style="left:220.65px;top:896px;font-size:11.5px;color:#545454;transform:scaleX(1.1514);">400</span>
<span class="t r" style="left:269.06px;top:896px;font-size:11.5px;color:#545454;transform:scaleX(1.1716);">600</span>
<span class="t r" style="left:317.88px;top:896px;font-size:11.5px;color:#545454;transform:scaleX(1.1675);">800</span>
<span class="t r" style="left:362.63px;top:896px;font-size:11.5px;color:#545454;transform:scaleX(1.1933);">1000</span>
<div style="left:286.25px;top:812.05px;width:14.50px;height:11.75px;border:1px solid #ccc"></div>
<div style="left:288.05px;top:813.60px;width:11.10px;height:8.50px;background:#0000ff"></div>
<span class="t r" style="left:303.78px;top:813px;font-size:11.5px;color:#8e8e8e;transform:scaleX(1.1622);">aida11 1.8.W</span>
<svg style="left:605px;top:791px" width="267" height="105" viewBox="605 791 267 105"><path d="M657.5 804.3V890.9M706.2 804.3V890.9M755 804.3V890.9M803.7 804.3V890.9M852.5 804.3V890.9M608.7 867.8H858.1M608.7 844.8H858.1M608.7 821.8H858.1" stroke="rgba(84,84,84,0.16)" stroke-width="0.9" fill="none"/><path d="M608.7 819.2L609.2 819.2L609.7 819.3L610.2 819.4L610.7 819.1L611.1 819.7L611.6 819.8L612.1 819.4L612.6 819.8L613.1 819.5L613.6 819.4L614.1 819L614.6 819.3L615 818.5L615.5 818.6L616 819.2L616.5 819.5L617 819.2L617.5 819L618 818.9L618.5 819.2L618.9 819.2L619.4 818.8L619.9 819L620.4 818.9L620.9 818.9L621.4 818.5L621.9 818.8L622.4 819.1L622.8 819.6L623.3 819.6L623.8 819.3L624.3 819.1L624.8 819.4L625.3 819.2L625.8 819.2L626.2 819.3L626.7 819.2L627.2 819.3L627.7 819.5L628.2 818.8L628.7 819.5L629.2 818.8L629.7 819L630.2 819.5L630.6 819L631.1 818.9L631.6 819L632.1 818.7L632.6 818.7L633.1 818.8L633.6 818.7L634.1 818.6L634.5 818.6L635 818.4L635.5 819.3L636 821.1L636.5 818.7L637 817.5L637.5 820.8L638 820L638.4 818.5L638.9 818.3L639.4 818.6L639.9 819L640.4 818.4L640.9 819.1L641.4 818.4L641.9 818.9L642.3 819L642.8 819.1L643.3 819.2L643.8 819.1L644.3 819.2L644.8 819.4L645.3 819.6L645.8 819L646.2 819.2L646.7 819.1L647.2 819.3L647.7 819.2L648.2 819.2L648.7 819.4L649.2 819.6L649.7 819.2L650.1 819.1L650.6 819L651.1 818.7L651.6 818.7L652.1 819L652.6 819.2L653.1 819.1L653.6 818.9L654 819.1L654.5 819.4L655 819.2L655.5 819.4L656 818.8L656.5 819.1L657 818.8L657.5 822.1L657.9 822.9L658.4 820.6L658.9 814.5L659.4 810.7L659.9 814.3L660.4 820.5L660.9 825.1L661.4 823.8L661.8 819.3L662.3 815.9L662.8 816L663.3 818.5L663.8 820.8L664.3 821.9L664.8 820.7L665.2 818.5L665.7 817.6L666.2 817.6L666.7 819.8L667.2 820.6L667.7 820.3L668.2 819.2L668.7 818.1L669.2 818.3L669.6 818.7L670.1 819.3L670.6 819.6L671.1 819.2L671.6 818.7L672.1 818.4L672.6 818.4L673.1 819.5L673.5 819.2L674 819.4L674.5 818.9L675 818.7L675.5 818.7L676 818.7L676.5 819.3L677 818.9L677.4 819L677.9 819L678.4 819.1L678.9 819.4L679.4 819L679.9 818.7L680.4 819.3L680.9 819.2L681.3 819L681.8 819L682.3 819.1L682.8 818.9L683.3 818.9L683.8 818.8L684.3 819.2L684.8 819L685.2 819.2L685.7 819L686.2 818.7L686.7 819.3L687.2 819.1L687.7 819.1L688.2 819.2L688.7 818.5L689.1 819.1L689.6 818.7L690.1 818.5L690.6 818.8L691.1 819L691.6 819.5L692.1 819L692.6 819L693 819.1L693.5 819L694 818.9L694.5 819.4L695 818.8L695.5 818.8L696 818.7L696.5 819L696.9 819.1L697.4 819.3L697.9 819.3L698.4 819.7L698.9 819.5L699.4 819.2L699.9 819.3L700.4 819.1L700.8 819.2L701.3 819.2L701.8 819.8L702.3 819.1L702.8 819.2L703.3 819.6L703.8 819.2L704.2 819.2L704.7 819.4L705.2 819L705.7 819.4L706.2 819.2L706.7 818.9L707.2 819L707.7 818.9L708.2 819.4L708.6 819.1L709.1 819.2L709.6 818.9L710.1 819.5L710.6 819L711.1 818.8L711.6 819.3L712.1 818.9L712.5 818.7L713 819.1L713.5 818.8L714 818.9L714.5 819.3L715 818.9L715.5 819.1L716 819.2L716.4 819.3L716.9 818.9L717.4 818.8L717.9 819L718.4 818.8L718.9 819L719.4 819L719.9 819.1L720.3 819.2L720.8 818.5L721.3 818.9L721.8 819.4L722.3 820.3L722.8 819.4L723.3 819.1L723.8 820.9L724.2 818.5L724.7 819.9L725.2 819.3L725.7 818.1L726.2 818.8L726.7 819.2L727.2 818.5L727.7 819.4L728.1 818.9L728.6 819.1L729.1 818.9L729.6 819L730.1 818.6L730.6 819.1L731.1 818.6L731.6 819.2L732 818.8L732.5 818.8L733 819.3L733.5 819.2L734 819.2L734.5 819L735 819.2L735.5 819.2L735.9 819L736.4 818.9L736.9 818.9L737.4 818.9L737.9 819.4L738.4 819.4L738.9 819.2L739.4 819.2L739.8 819.4L740.3 819.5L740.8 819.3L741.3 819.3L741.8 819.5L742.3 819.1L742.8 819L743.2 819.3L743.7 819L744.2 819.1L744.7 818.9L745.2 819.4L745.7 819.2L746.2 819.1L746.7 819.2L747.2 819.5L747.6 819.1L748.1 819L748.6 819L749.1 818.9L749.6 819.1L750.1 818.9L750.6 818.9L751.1 818.9L751.5 819.2L752 818.9L752.5 819.2L753 818.9L753.5 819.2L754 819.1L754.5 819.1L755 819L755.4 818.9L755.9 819.1L756.4 818.6L756.9 818.9L757.4 819.6L757.9 819.3L758.4 819.6L758.9 819.7L759.3 819.3L759.8 818.9L760.3 819.2L760.8 818.8L761.3 818.9L761.8 818.9L762.3 819.2L762.8 818.8L763.2 818.9L763.7 818.9L764.2 819.5L764.7 819L765.2 819.1L765.7 818.7L766.2 818.7L766.7 819.4L767.1 818.5L767.6 818.8L768.1 818.8L768.6 818.9L769.1 819.1L769.6 818.9L770.1 819.4L770.6 819.2L771 819.1L771.5 819.2L772 819.1L772.5 819L773 819.1L773.5 818.8L774 819.1L774.5 819L774.9 818.6L775.4 819.4L775.9 819.3L776.4 819.3L776.9 819.3L777.4 819L777.9 819L778.4 819.3L778.8 819.1L779.3 819.3L779.8 819.5L780.3 818.9L780.8 818.7L781.3 819.4L781.8 819.3L782.2 819.5L782.7 819.3L783.2 819.3L783.7 819L784.2 819.5L784.7 819.1L785.2 819.3L785.7 818.9L786.2 818.8L786.6 819.1L787.1 819.2L787.6 818.6L788.1 819.1L788.6 819.4L789.1 819.6L789.6 819.3L790.1 819.1L790.5 819.3L791 819.1L791.5 818.6L792 818.8L792.5 819.3L793 819L793.5 819.4L794 819.5L794.4 818.9L794.9 819.4L795.4 819.1L795.9 819.6L796.4 818.9L796.9 819.5L797.4 819.1L797.9 819L798.3 819L798.8 818.8L799.3 819L799.8 819.7L800.3 819.1L800.8 818.9L801.3 819.6L801.8 819.3L802.2 819L802.7 819L803.2 818.5L803.7 818.7L804.2 818.5L804.7 819.1L805.2 819L805.7 818.8L806.1 818.7L806.6 818.6L807.1 818.9L807.6 818.8L808.1 819.1L808.6 818.7L809.1 819.1L809.6 819L810 818.7L810.5 819L811 818.8L811.5 818.9L812 818.9L812.5 819.7L813 818.8L813.5 819.3L813.9 818.9L814.4 818.9L814.9 819.6L815.4 819L815.9 818.9L816.4 817.2L816.9 818.4L817.4 820.7L817.8 819.7L818.3 816.5L818.8 818L819.3 818.9L819.8 818.3L820.3 819.1L820.8 818.6L821.2 819.5L821.7 819.3L822.2 819.2L822.7 818.6L823.2 818.9L823.7 819.2L824.2 818.8L824.7 819.1L825.2 818.9L825.6 819.3L826.1 819.6L826.6 819.2L827.1 819.7L827.6 819.1L828.1 819.3L828.6 819.5L829.1 819L829.5 819.4L830 818.9L830.5 819.2L831 819.3L831.5 819.8L832 819.2L832.5 819.8L833 819.1L833.4 819.4L833.9 819.5L834.4 819.2L834.9 819.6L835.4 819.1L835.9 818.8L836.4 819.1L836.9 819.4L837.3 818.8L837.8 818.7L838.3 819.6L838.8 818.9L839.3 819.3L839.8 819.1L840.3 818.7L840.8 818.7L841.2 818.9L841.7 818.7L842.2 819.1L842.7 819L843.2 819L843.7 819.5L844.2 819.1L844.7 818.8L845.1 819L845.6 819L846.1 819.4L846.6 819.1L847.1 818.8L847.6 818.8L848.1 819L848.6 819.1L849 819.6L849.5 819.1L850 819.1L850.5 819.2L851 819.1L851.5 819.4L852 819.1L852.5 818.9L852.9 818.9L853.4 818.7L853.9 818.9L854.4 818.9L854.9 819.3L855.4 818.8L855.9 819.3L856.4 819.1L856.8 818.8" stroke="#0c0cff" stroke-width="1.02" fill="none" stroke-linejoin="round"/><rect x="608.55" y="804.15" width="250.05" height="86.80" fill="none" stroke="#7f7f7f" stroke-width="1.7"/><path d="M857.70 795.00l9.8 9.9-9.8 9.9-9.8-9.9z" fill="#ff0000"/></svg>
<span class="t r" style="left:597.71px;top:886px;font-size:11.5px;color:#545454;transform:scaleX(1.2133);">0</span>
<span class="t r" style="left:577.86px;top:862px;font-size:11.5px;color:#545454;transform:scaleX(1.1654);">2500</span>
<span class="t r" style="left:577.66px;top:840px;font-size:11.5px;color:#545454;transform:scaleX(1.1746);">5000</span>
<span class="t r" style="left:577.52px;top:817px;font-size:11.5px;color:#545454;transform:scaleX(1.1808);">7500</span>
<span class="t r" style="left:605.61px;top:896px;font-size:11.5px;color:#545454;transform:scaleX(1.2133);">0</span>
<span class="t r" style="left:647.71px;top:896px;font-size:11.5px;color:#545454;transform:scaleX(1.1716);">200</span>
<span class="t r" style="left:696.80px;top:896px;font-size:11.5px;color:#545454;transform:scaleX(1.1514);">400</span>
<span class="t r" style="left:745.21px;top:896px;font-size:11.5px;color:#545454;transform:scaleX(1.1716);">600</span>
<span class="t r" style="left:794.03px;top:896px;font-size:11.5px;color:#545454;transform:scaleX(1.1675);">800</span>
<span class="t r" style="left:838.78px;top:896px;font-size:11.5px;color:#545454;transform:scaleX(1.1933);">1000</span>
<div style="left:762.20px;top:812.05px;width:14.50px;height:11.75px;border:1px solid #ccc"></div>
<div style="left:764.00px;top:813.60px;width:11.10px;height:8.50px;background:#0000ff"></div>
<span class="t r" style="left:779.74px;top:813px;font-size:11.5px;color:#8e8e8e;transform:scaleX(1.1545);">aida07 1.8.W</span>
<svg style="left:1081px;top:791px" width="267" height="105" viewBox="1081 791 267 105"><path d="M1133.5 804.3V890.9M1182.3 804.3V890.9M1231 804.3V890.9M1279.8 804.3V890.9M1328.5 804.3V890.9M1084.8 866.1H1334.2M1084.8 841.4H1334.2M1084.8 816.8H1334.2" stroke="rgba(84,84,84,0.30)" stroke-width="0.9" fill="none"/><path d="M1084.8 814.2L1085.3 813.8L1085.8 813.4L1086.3 813.6L1086.8 813.6L1087.2 813.4L1087.7 813.8L1088.2 813.7L1088.7 814.1L1089.2 813.7L1089.7 813.3L1090.2 814.1L1090.6 814L1091.1 813.5L1091.6 814.1L1092.1 813.8L1092.6 813.5L1093.1 813.9L1093.6 813.8L1094.1 813.6L1094.5 813.9L1095 813.6L1095.5 813.7L1096 813.8L1096.5 813.9L1097 813.9L1097.5 813.1L1098 813.6L1098.5 813.9L1098.9 813.9L1099.4 813.5L1099.9 814L1100.4 813.5L1100.9 814.1L1101.4 813.8L1101.9 813.8L1102.3 813.4L1102.8 813.5L1103.3 813.8L1103.8 813.8L1104.3 813.7L1104.8 813.7L1105.3 814.1L1105.8 813.6L1106.2 813.9L1106.7 814L1107.2 813.9L1107.7 813.8L1108.2 813.4L1108.7 814.2L1109.2 814.1L1109.7 813.5L1110.1 813.5L1110.6 813.5L1111.1 813.4L1111.6 813.7L1112.1 813.5L1112.6 813.8L1113.1 813.9L1113.6 813.6L1114 813.4L1114.5 814L1115 814L1115.5 813.7L1116 813.5L1116.5 813.9L1117 813.8L1117.5 814L1118 813.8L1118.4 813.6L1118.9 813.5L1119.4 813.8L1119.9 813.4L1120.4 813.5L1120.9 814L1121.4 813.9L1121.8 813.9L1122.3 814.1L1122.8 813.7L1123.3 813.6L1123.8 813.8L1124.3 814L1124.8 813.5L1125.3 814.2L1125.8 814.1L1126.2 813.4L1126.7 813.5L1127.2 813.9L1127.7 813.8L1128.2 814L1128.7 813.9L1129.2 813.7L1129.6 813.6L1130.1 813.9L1130.6 813.9L1131.1 813.6L1131.6 813.7L1132.1 813.8L1132.6 825.5L1133.1 841.1L1133.5 850.5L1134 855.1L1134.5 858.5L1135 860.1L1135.5 861.4L1136 862.4L1136.5 863.1L1137 863L1137.5 863L1137.9 863L1138.4 863.3L1138.9 863.6L1139.4 863.2L1139.9 863.5L1140.4 863.9L1140.9 863.9L1141.3 863.8L1141.8 863.7L1142.3 864.1L1142.8 863.8L1143.3 864.6L1143.8 864.1L1144.3 864L1144.8 864.5L1145.2 863.9L1145.7 864.1L1146.2 864.4L1146.7 863.9L1147.2 864.3L1147.7 864.1L1148.2 863.9L1148.7 864.3L1149.1 864.2L1149.6 864.2L1150.1 864.4L1150.6 864L1151.1 864.5L1151.6 864.7L1152.1 863.9L1152.6 864.1L1153 864.2L1153.5 863.9L1154 864.3L1154.5 864.2L1155 864.1L1155.5 864.4L1156 864.1L1156.5 864.1L1157 864.3L1157.4 864.2L1157.9 864.3L1158.4 864.5L1158.9 863.9L1159.4 864.2L1159.9 864.4L1160.4 864.1L1160.8 864.1L1161.3 864.2L1161.8 864.2L1162.3 864.1L1162.8 863.9L1163.3 864.1L1163.8 863.9L1164.3 864.1L1164.8 864L1165.2 863.5L1165.7 863.9L1166.2 864.1L1166.7 864.1L1167.2 863.9L1167.7 863.7L1168.2 863.6L1168.6 863.4L1169.1 864L1169.6 864.1L1170.1 864.2L1170.6 864.3L1171.1 863.5L1171.6 864L1172.1 863.6L1172.5 863.3L1173 863.8L1173.5 863.6L1174 863.9L1174.5 863.9L1175 863.8L1175.5 864.1L1176 864.2L1176.5 863.6L1176.9 863.9L1177.4 864.1L1177.9 863.6L1178.4 863.5L1178.9 863.7L1179.4 863.5L1179.9 863.8L1180.3 863.9L1180.8 863.5L1181.3 863.8L1181.8 863.5L1182.3 864.1L1182.8 863.7L1183.3 863.9L1183.8 863.7L1184.2 863.3L1184.7 863.4L1185.2 863.6L1185.7 863.2L1186.2 863.8L1186.7 863.4L1187.2 864L1187.7 863.2L1188.1 863.1L1188.6 863.7L1189.1 863.3L1189.6 863L1190.1 863.7L1190.6 863.4L1191.1 863.3L1191.6 863.1L1192 863.4L1192.5 863.3L1193 863.1L1193.5 863.2L1194 863.4L1194.5 863L1195 863.6L1195.5 863.2L1196 863L1196.4 863.2L1196.9 862.8L1197.4 863.3L1197.9 863.5L1198.4 862.7L1198.9 863.1L1199.4 863.1L1199.8 862.9L1200.3 862.7L1200.8 862.8L1201.3 862.7L1201.8 863.2L1202.3 862.7L1202.8 863.1L1203.3 862.9L1203.8 863.3L1204.2 862.8L1204.7 863.1L1205.2 863L1205.7 862.8L1206.2 862.7L1206.7 863.1L1207.2 862.8L1207.6 862.6L1208.1 862.9L1208.6 863L1209.1 862.7L1209.6 863.1L1210.1 862.5L1210.6 862.2L1211.1 862.5L1211.5 863.1L1212 862.5L1212.5 862.7L1213 862.7L1213.5 862.8L1214 863.1L1214.5 863L1215 862.9L1215.5 862.5L1215.9 862.8L1216.4 862.8L1216.9 862.2L1217.4 862.6L1217.9 862.3L1218.4 861.8L1218.9 862.4L1219.3 862.9L1219.8 862.4L1220.3 863L1220.8 862.8L1221.3 862.6L1221.8 862.5L1222.3 862.4L1222.8 862.3L1223.2 862.4L1223.7 862L1224.2 862.7L1224.7 862.9L1225.2 862.8L1225.7 862.4L1226.2 862.8L1226.7 862.3L1227.1 861.9L1227.6 862.4L1228.1 862.7L1228.6 862.1L1229.1 862.5L1229.6 862.4L1230.1 862.2L1230.6 862L1231 862.4L1231.5 862.5L1232 862.4L1232.5 862.4L1233 862.5L1233.5 862.4L1234 862.3L1234.5 862.7L1235 862.4L1235.4 862.3L1235.9 862L1236.4 861.9L1236.9 861.8L1237.4 861.8L1237.9 861.9L1238.4 861.9L1238.8 861.5L1239.3 862.1L1239.8 861.8L1240.3 861.8L1240.8 861.7L1241.3 862.4L1241.8 862.2L1242.3 862L1242.8 861.6L1243.2 861.9L1243.7 862L1244.2 861.9L1244.7 862L1245.2 861.6L1245.7 861.8L1246.2 862.1L1246.6 861.9L1247.1 861.8L1247.6 862L1248.1 861.4L1248.6 861.8L1249.1 862L1249.6 861.9L1250.1 861.8L1250.5 861.3L1251 861.6L1251.5 861.2L1252 861.6L1252.5 862L1253 861.6L1253.5 861.8L1254 861.6L1254.5 861.5L1254.9 861.5L1255.4 861.6L1255.9 861.5L1256.4 862.3L1256.9 861.8L1257.4 861.2L1257.9 861.7L1258.3 861.4L1258.8 861.4L1259.3 861.3L1259.8 861.7L1260.3 861.4L1260.8 861L1261.3 861.4L1261.8 861.2L1262.2 860.8L1262.7 861.5L1263.2 861.5L1263.7 861.6L1264.2 860.7L1264.7 860.8L1265.2 861.7L1265.7 861.4L1266.1 861L1266.6 861.3L1267.1 861.3L1267.6 861.1L1268.1 861L1268.6 861.1L1269.1 861.2L1269.6 860.8L1270 861L1270.5 861.2L1271 861.2L1271.5 860.7L1272 860.7L1272.5 860.9L1273 861.3L1273.5 861L1274 860.9L1274.4 860.6L1274.9 861L1275.4 861.6L1275.9 860.8L1276.4 861.6L1276.9 860.4L1277.4 860.6L1277.8 861.3L1278.3 860.6L1278.8 860.7L1279.3 861.1L1279.8 860.5L1280.3 857.4L1280.8 851.3L1281.3 847L1281.8 842.4L1282.2 838.8L1282.7 835.3L1283.2 832.5L1283.7 829.9L1284.2 827.8L1284.7 825.5L1285.2 824.1L1285.6 822.5L1286.1 821.9L1286.6 820.2L1287.1 819.6L1287.6 819.1L1288.1 818.3L1288.6 817.7L1289.1 817.1L1289.5 816.7L1290 816.1L1290.5 815.6L1291 815.4L1291.5 815L1292 814.6L1292.5 815.1L1293 814.1L1293.5 814.7L1293.9 814.3L1294.4 814.7L1294.9 814.1L1295.4 814L1295.9 814.2L1296.4 813.4L1296.9 813.7L1297.3 814.2L1297.8 814L1298.3 813.5L1298.8 813.3L1299.3 813.4L1299.8 813.7L1300.3 813.3L1300.8 813.8L1301.2 813.2L1301.7 813.7L1302.2 813.7L1302.7 813.5L1303.2 814.2L1303.7 813.7L1304.2 813.8L1304.7 814.1L1305.1 813.5L1305.6 813.8L1306.1 814L1306.6 813.7L1307.1 813.6L1307.6 813.7L1308.1 813.9L1308.6 813.7L1309 814L1309.5 813.4L1310 813.7L1310.5 814L1311 813.4L1311.5 813.9L1312 813.7L1312.5 814L1313 813.6L1313.4 813.7L1313.9 813.4L1314.4 813.9L1314.9 813.7L1315.4 813.7L1315.9 813.6L1316.4 814L1316.8 813.8L1317.3 814L1317.8 813.5L1318.3 813.7L1318.8 814L1319.3 814.2L1319.8 814.3L1320.3 814L1320.8 814L1321.2 813.9L1321.7 813.5L1322.2 813.7L1322.7 813.4L1323.2 813.4L1323.7 813.7L1324.2 813.8L1324.6 813.9L1325.1 814.3L1325.6 813.4L1326.1 813.5L1326.6 813.6L1327.1 813.9L1327.6 813.6L1328.1 813.4L1328.5 813.9L1329 813.7L1329.5 813.5L1330 814.1L1330.5 814L1331 813.6L1331.5 813.8L1332 813.6L1332.5 813.6L1332.9 813.6" stroke="#0c0cff" stroke-width="1.02" fill="none" stroke-linejoin="round"/><rect x="1084.65" y="804.15" width="250.05" height="86.80" fill="none" stroke="#000" stroke-width="1.7"/><path d="M1333.80 795.00l9.8 9.9-9.8 9.9-9.8-9.9z" fill="#00ff00"/></svg>
<span class="t r" style="left:1074.11px;top:886px;font-size:11.5px;color:#545454;transform:scaleX(1.2133);">0</span>
<span class="t r" style="left:1054.26px;top:861px;font-size:11.5px;color:#545454;transform:scaleX(1.1654);">2500</span>
<span class="t r" style="left:1054.06px;top:836px;font-size:11.5px;color:#545454;transform:scaleX(1.1746);">5000</span>
<span class="t r" style="left:1053.92px;top:812px;font-size:11.5px;color:#545454;transform:scaleX(1.1808);">7500</span>
<span class="t r" style="left:1082.11px;top:896px;font-size:11.5px;color:#545454;transform:scaleX(1.2133);">0</span>
<span class="t r" style="left:1124.21px;top:896px;font-size:11.5px;color:#545454;transform:scaleX(1.1716);">200</span>
<span class="t r" style="left:1173.30px;top:896px;font-size:11.5px;color:#545454;transform:scaleX(1.1514);">400</span>
<span class="t r" style="left:1221.71px;top:896px;font-size:11.5px;color:#545454;transform:scaleX(1.1716);">600</span>
<span class="t r" style="left:1270.53px;top:896px;font-size:11.5px;color:#545454;transform:scaleX(1.1675);">800</span>
<span class="t r" style="left:1315.28px;top:896px;font-size:11.5px;color:#545454;transform:scaleX(1.1933);">1000</span>
<div style="left:1238.30px;top:812.05px;width:14.50px;height:11.75px;border:1px solid #ccc"></div>
<div style="left:1240.10px;top:813.60px;width:11.10px;height:8.50px;background:#0000ff"></div>
<span class="t r" style="left:1255.84px;top:813px;font-size:11.5px;color:#000;transform:scaleX(1.1545);">aida16 1.8.W</span>
<svg width="0" height="0" style="left:0;top:0"><defs><radialGradient id="gy" cx=".45" cy=".3" r=".8"><stop offset="0" stop-color="#ffe23a"/><stop offset=".6" stop-color="#f5c400"/><stop offset="1" stop-color="#c98f00"/></radialGradient><radialGradient id="gk" cx=".5" cy=".35" r=".7"><stop offset="0" stop-color="#333"/><stop offset=".7" stop-color="#0a0a0a"/><stop offset="1" stop-color="#000"/></radialGradient><linearGradient id="gb" x1="0" y1="0" x2="0" y2="1"><stop offset="0" stop-color="#9ed2f5"/><stop offset=".45" stop-color="#3f9be6"/><stop offset="1" stop-color="#0f63c4"/></linearGradient><linearGradient id="gbu" gradientUnits="userSpaceOnUse" x1="0" y1="355" x2="0" y2="374.5"><stop offset="0" stop-color="#a6d6f7"/><stop offset=".4" stop-color="#4aa0e8"/><stop offset="1" stop-color="#0c5ec4"/></linearGradient><radialGradient id="gc" cx=".5" cy=".5" r=".5"><stop offset="0" stop-color="#1fb0f8"/><stop offset=".75" stop-color="#119af0"/><stop offset="1" stop-color="#0a6fcc"/></radialGradient><radialGradient id="gl" cx=".45" cy=".4" r=".6"><stop offset="0" stop-color="#ffffff"/><stop offset="1" stop-color="#e6e6e6"/></radialGradient><linearGradient id="ggv" x1="0" y1="0" x2="0" y2="1"><stop offset="0" stop-color="#d3ea8c"/><stop offset=".5" stop-color="#a5d032"/><stop offset=".52" stop-color="#86bd12"/><stop offset="1" stop-color="#6aa80c"/></linearGradient><linearGradient id="ggh" x1="0" y1="0" x2="1" y2="0"><stop offset="0" stop-color="#6aa80c"/><stop offset=".45" stop-color="#96c81c"/><stop offset="1" stop-color="#dcea84"/></linearGradient><linearGradient id="ggd" x1="0" y1="0" x2="1" y2="0"><stop offset="0" stop-color="#d6ea90"/><stop offset=".48" stop-color="#b4d850"/><stop offset=".5" stop-color="#8cc016"/><stop offset="1" stop-color="#74b00c"/></linearGradient><radialGradient id="gs" cx=".5" cy=".5" r=".5"><stop offset="0" stop-color="#5a4630" stop-opacity=".55"/><stop offset="1" stop-color="#5a4630" stop-opacity="0"/></radialGradient></defs></svg>
<svg style="left:0;top:348px" width="600" height="34" viewBox="0 348 600 34"><ellipse cx="19" cy="375.4" rx="8.5" ry="1.3" fill="url(#gs)"/><circle cx="19.0" cy="365.0" r="10.2" fill="url(#gk)"/><path d="M19.0 365.0L13.90 356.17A10.2 10.2 0 0 1 24.10 356.17zM19.0 365.0L29.20 365.00A10.2 10.2 0 0 1 24.10 373.83zM19.0 365.0L13.90 373.83A10.2 10.2 0 0 1 8.80 365.00z" fill="url(#gy)"/><circle cx="19.0" cy="365.0" r="9.899999999999999" fill="none" stroke="#e8a838" stroke-width=".6" opacity=".7"/><ellipse cx="19.0" cy="359.4" rx="6.6" ry="3.6" fill="#fff" opacity=".16"/><ellipse cx="76.5" cy="374.6" rx="9" ry="1.3" fill="url(#gs)"/><g fill="url(#gbu)" stroke="#1c6cc6" stroke-width=".6" stroke-linejoin="round"><path d="M71.9 373.8A10.7 10.2 0 0 1 67.9 358L67.7 355.3 75.8 355.3 74 362.3 72.3 361.2A5.9 5.9 0 0 0 73.7 371.4z"/><path d="M80.5 355.6A10.7 10.2 0 0 1 84.5 371.4L84.7 374.1 76.6 374.1 78.4 367.1 80.1 368.2A5.9 5.9 0 0 0 78.7 358z"/></g><path d="M68.6 356.2L74.6 356.2M81.2 357.4A9.4 9 0 0 1 85.4 362.6" stroke="#d4ecfc" stroke-width=".9" fill="none" opacity=".8"/><ellipse cx="164.6" cy="374.6" rx="8" ry="1.3" fill="url(#gs)"/><path d="M165.79999999999998 365.7L174.7 373.5" stroke="#0a0a0a" stroke-width="3.3" stroke-linecap="round"/><path d="M166.2 365.1L174.2 372.1" stroke="#f2f2f2" stroke-width="1" stroke-linecap="round"/><circle cx="160.6" cy="360.5" r="6.5" fill="url(#gl)" stroke="#c4c4c4" stroke-width="1.9"/><circle cx="160.6" cy="360.5" r="7.5" fill="none" stroke="#aaa" stroke-width=".4"/><path d="M169.2 352.9h2.8v3.9h4v2.8h-4v3.9h-2.8v-3.9h-4v-2.8h4z" fill="#a6d02a" stroke="#6c9e12" stroke-width=".7" stroke-linejoin="round"/><path d="M170.6 353.8v8.8M166.2 358.2h8.8" stroke="#e2ee5e" stroke-width=".9"/><ellipse cx="222.4" cy="374.6" rx="8" ry="1.3" fill="url(#gs)"/><path d="M223.6 365.7L232.5 373.5" stroke="#0a0a0a" stroke-width="3.3" stroke-linecap="round"/><path d="M224.0 365.1L232.0 372.1" stroke="#f2f2f2" stroke-width="1" stroke-linecap="round"/><circle cx="218.4" cy="360.5" r="6.5" fill="url(#gl)" stroke="#c4c4c4" stroke-width="1.9"/><circle cx="218.4" cy="360.5" r="7.5" fill="none" stroke="#aaa" stroke-width=".4"/><rect x="222.7" y="356.7" width="10.8" height="3" rx="1.2" fill="#dc3232" stroke="#c02020" stroke-width=".4"/><path d="M223.6 357.6h9" stroke="#f08a8a" stroke-width=".6"/><circle cx="278.75" cy="364.35" r="10.1" fill="url(#gc)" stroke="#0a62bc" stroke-width=".6"/><circle cx="278.75" cy="364.35" r="8.9" fill="none" stroke="#7fd0ff" stroke-width=".5" opacity=".7"/><path d="M275.65 358.9h6.2l-3.1 5.4zM275.65 364.7h6.2l-3.1 5.5z" fill="#3a3632"/><circle cx="337.6" cy="364.35" r="10.1" fill="url(#gc)" stroke="#0a62bc" stroke-width=".6"/><circle cx="337.6" cy="364.35" r="8.9" fill="none" stroke="#7fd0ff" stroke-width=".5" opacity=".7"/><path d="M337.6 358.6l3.2 5.2h-6.4zM337.6 364.2l3.2 5.4h-6.4z" fill="#3a3632"/><path d="M383.4 364.6L391.9 356.4 392.6 360H404a.7.7 0 0 1 .7.7v8a.7.7 0 0 1-.7.7H392.6L391.9 372.9z" fill="url(#ggh)" stroke="#5e9c10" stroke-width=".8" stroke-linejoin="round"/><ellipse cx="457" cy="372.6" rx="8" ry="1" fill="url(#gs)"/><path d="M463.7 363.5L452.2 355.1 452.4 359.3H440.5a.7.7 0 0 0-.7.7v7.3a.7.7 0 0 0 .7.7H452.4L452.2 372z" fill="url(#ggv)" stroke="#5e9c10" stroke-width=".8" stroke-linejoin="round"/><ellipse cx="508.8" cy="374.6" rx="7" ry="1.2" fill="url(#gs)"/><path d="M508.75 354.4L517.1 363.1 513.9 363.2V374a.6.6 0 0 1-.6.6h-8.9a.6.6 0 0 1-.6-.6V363.2L500.5 363.1z" fill="url(#ggv)" stroke="#5e9c10" stroke-width=".8" stroke-linejoin="round"/><path d="M565.2 376.5L556.2 364.8 560.1 365V353.7a.6.6 0 0 1 .6-.6h8.7a.6.6 0 0 1 .6.6V365L574 364.8z" fill="url(#ggd)" stroke="#5e9c10" stroke-width=".8" stroke-linejoin="round"/></svg>
<svg style="left:1825px;top:160px" width="51" height="51" viewBox="1825 160 51 51"><rect x="1825" y="160" width="51" height="51" fill="#f8c900"/><circle cx="1832.2" cy="165.4" r="4.8" fill="#0a2a6a"/><path d="M1832.2 162.7l2.9 4.5h-5.8z" fill="#fff"/><path d="M1864.1 161h6.2v4.6c0 2.2-1.4 3.4-3.1 4.2-1.7-.8-3.1-2-3.1-4.2z" fill="#16357c"/><path d="M1865.6 162.3h3.2v2h-3.2zM1866 166h2.4v1.4h-2.4z" fill="#dfe6f5"/><rect x="1851.3" y="191.5" width="10.9" height="17.2" fill="#d63a10"/><path d="M1857.6 194.5c1.3 1.2 1 3.4.2 5.6-.6 1.8-.8 3.6-.4 5.4-1.4-1.6-1.8-3.6-1.4-5.8.3-1.8.6-3.6 1.6-5.2z" fill="#2450b8"/><path d="M1853 205.6h7.4" stroke="#f3b45a" stroke-width=".9"/><path d="M1828.8 195.2h15.2" stroke="#1a1400" stroke-width="1.5" stroke-dasharray="1.6 .5 2 .4 1.2 .5"/></svg>
<span class="t rb" style="left:1826.93px;top:168px;font-size:25.2px;color:#000;transform:scaleX(0.9734);">M</span>
<span class="t sb" style="left:1849.16px;top:176px;font-size:12.4px;color:#000;transform:scaleX(1.0441);">idas</span>
<svg style="left:1879px;top:158px" width="38" height="55" viewBox="1879 158 38 55"><path d="M1881.2 201.3L1909.3 201.8 1908.8 210.6 1881.3 208.8z" fill="#1646b4"/><path d="M1911.6 169.5l2.2.2-.6 12.8-1.8-.2z" fill="#1d50c0"/><path d="M1883.3 161.2L1912 160.4 1912.2 202.3 1883.2 201.6z" fill="#d43c06"/><path d="M1901.3 165c2.600 1.200 2.200 4.600.8 8.600-1.400 4-2.400 7.600-2.200 12 .2 3.400 0 6.400-3.200 10-.2-3.400-1.800-5.400-2.600-8.800-.8-3.600-.4-7.400 1-11.200 1.400-3.800 3.600-7.600 6.200-10.600z" fill="#1f4fc0"/><path d="M1899 175.600c-1 5-1.400 10-.8 15.400M1893.800 181.600l2 7.400M1901 181.400l-1.400 6" stroke="#f4efe6" stroke-width=".8" fill="none"/><path d="M1889.400 164.200l1.400 5.400M1892.600 163l-.8 4.400M1907.400 170.400l-1.400 3.600M1909.600 172l-.8 2.600" stroke="#f6a81e" stroke-width="1" fill="none"/><path d="M1884.600 196.600h3.200M1886.200 196.600v4M1892.200 197c-1.600-.8-3.200.2-3.200 1.800s1.600 2.600 3.200 1.800M1893.800 196.600v4h2.400" stroke="#f4efe6" stroke-width="1" fill="none"/><path d="M1885.800 206l21.400.9" stroke="#f0e23c" stroke-width="2.600" stroke-dasharray="2.200 .8"/></svg>
</body></html>
